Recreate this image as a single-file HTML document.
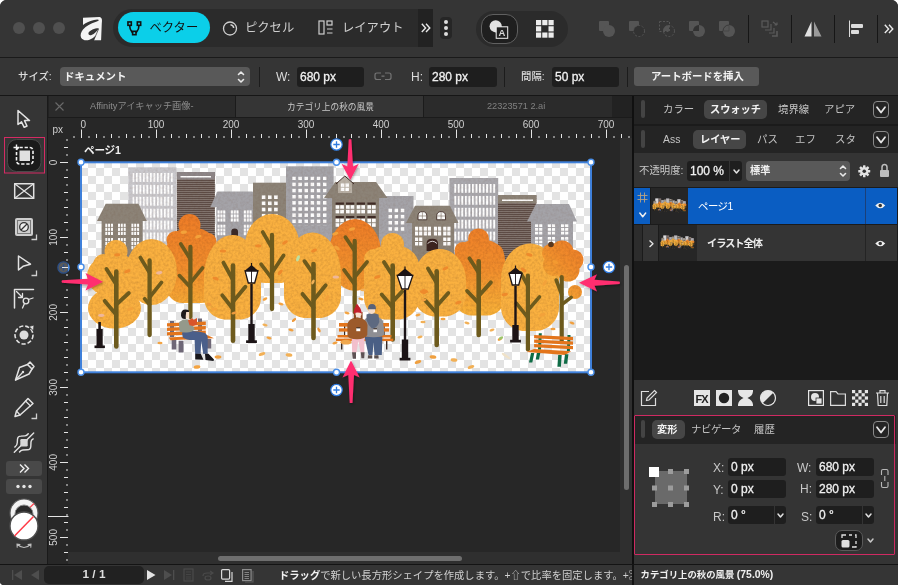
<!DOCTYPE html>
<html lang="ja">
<head>
<meta charset="utf-8">
<title>Affinity</title>
<style>
*{box-sizing:border-box;margin:0;padding:0}
html,body{width:898px;height:585px;overflow:hidden;background:#fff}
body{font-family:"Liberation Sans","Noto Sans CJK JP",sans-serif;font-size:11px;color:#d2d2d2;position:relative;-webkit-font-smoothing:antialiased}
.abs,#win *{position:absolute}
#win{will-change:transform;position:absolute;left:0;top:0;width:898px;height:585px;background:#1a1a1a;border-radius:6.500px 6.500px 0 4px;overflow:hidden}
.t{white-space:nowrap;line-height:1}
svg{display:block;overflow:visible}
#art{overflow:hidden}
/* title bar */
#title{left:0;top:0;width:898px;height:57px;background:#353535}
#ctx{left:0;top:58px;width:898px;height:37px;background:#353535}
.dot{width:12px;height:12px;border-radius:50%;background:#505050;top:22px}
.inp{background:#1e1e1e;border-radius:3px;color:#f0f0f0;font-size:12px}
.inp span{left:3px;top:4px;-webkit-text-stroke:0.300px #f0f0f0}
.sel{background:#595959;border-radius:4px}
.vsep{width:1px;background:#1c1c1c}
</style>
</head>
<body>
<div id="win">
<!-- TITLE BAR -->
<div id="title">
  <div class="dot" style="left:13px"></div><div class="dot" style="left:33px"></div><div class="dot" style="left:53px"></div>
  <svg style="left:80px;top:15.500px" width="23" height="25" viewBox="0 0 23 25"><path d="M3 1.700 L19.500 1 C22 1.300 22.300 4 21.800 7 L21.100 24.300 L13.900 24.300 L15.800 19.500 C13.500 22 11.500 23 9.500 23.700 C6 25 2.500 24.300 1 21.500 C0 19 1 16 3 13.500 C6 10 11 7.200 15.500 5.900 C17.500 5.300 19 4.900 18.800 4 C18.500 3.100 16.500 3.300 14 3.900 C9 5.100 5.500 6.900 3 8.900 Z" fill="#f4f4f4"/><path d="M18.900 12.200 C15 12 10 14 8.600 16.600 C7.800 18.600 9.500 19.900 11.500 19.100 C14.500 17.900 17 15.200 18.900 12.200 Z" fill="#353535"/><path d="M18.600 13 L13.600 24.500" stroke="#353535" stroke-width="0.700"/></svg>
  <div style="left:113px;top:9px;width:320px;height:38px;background:#2b2b2b;border-radius:19px 0 0 19px"></div>
  <div style="left:418px;top:9px;width:15px;height:38px;background:#222"></div>
  <div style="left:118.400px;top:12.400px;width:91.200px;height:31.100px;background:#0bcfe9;border-radius:15.500px"></div>
  <svg style="left:127px;top:20.700px" width="15" height="15" viewBox="0 0 16 16" fill="none" stroke="#111" stroke-width="1.700"><rect x="1" y="1" width="3.6" height="3.6"/><rect x="11" y="1" width="3.6" height="3.6"/><rect x="6" y="11" width="3.6" height="3.6"/><path d="M2.8 4.6 C2.8 10 5 11 6 12.5 M12.8 4.6 C12.8 10 10.5 11 9.6 12.5"/></svg>
  <div class="t" style="left:149.500px;top:22.200px;font-size:12.300px;color:#111">ベクター</div>
  <svg style="left:222px;top:20px" width="16" height="16" viewBox="0 0 16 16" fill="none" stroke="#cfcfcf" stroke-width="1.3"><circle cx="8" cy="8.500" r="6.500"/><path d="M8.500 4.800 A3.700 3.700 0 0 1 11.700 8" stroke-width="1.500"/></svg>
  <div class="t" style="left:245px;top:22.200px;font-size:12.300px;color:#cfcfcf">ピクセル</div>
  <svg style="left:318px;top:20px" width="16" height="16" viewBox="0 0 16 16" fill="none" stroke="#cfcfcf" stroke-width="1.2"><rect x="1" y="1" width="5" height="13"/><rect x="9" y="1" width="5" height="4"/><path d="M9 9 H14.5 M9 13 H14.5"/></svg>
  <div class="t" style="left:342px;top:22.200px;font-size:12.300px;color:#cfcfcf">レイアウト</div>
  <svg style="left:421.2px;top:23.2px" width="10" height="10" viewBox="0 0 10 10" fill="none" stroke="#e8e8e8" stroke-width="1.400"><path d="M0.800 0.800 L4.600 4.900 L0.800 9 M5 0.800 L8.800 4.900 L5 9"/></svg>
  <div style="left:440px;top:17px;width:12px;height:22px;background:#262626;border-radius:4px"></div>
  <div style="left:444px;top:20px;width:4px;height:4px;border-radius:50%;background:#ddd"></div>
  <div style="left:444px;top:26px;width:4px;height:4px;border-radius:50%;background:#ddd"></div>
  <div style="left:444px;top:32px;width:4px;height:4px;border-radius:50%;background:#ddd"></div>

  <!-- right side of title bar -->
  <div style="left:476px;top:10.500px;width:92px;height:36px;background:#2b2b2b;border-radius:18px"></div>
  <div style="left:480.500px;top:14.200px;width:37.500px;height:29.400px;background:#1f1f1f;border:1px solid #606060;border-radius:12px"></div>
  <svg style="left:488px;top:18.500px" width="22" height="21" viewBox="0 0 22 21"><circle cx="7.700" cy="7.300" r="6.100" fill="#e2e2e2"/><rect x="8.200" y="7.800" width="11.500" height="11.500" fill="#202020" stroke="#f0f0f0" stroke-width="1"/><text x="14" y="17.300" font-size="9.500" font-family="Liberation Sans, sans-serif" font-weight="bold" fill="#d8d8d8" text-anchor="middle">A</text></svg>
  <svg style="left:535.900px;top:19.700px" width="17.700" height="17.700" viewBox="0 0 17.700 17.700" fill="#ececec"><rect x="0" y="0" width="5.200" height="5.200"/><rect x="0" y="6.25" width="5.200" height="5.200"/><rect x="0" y="12.5" width="5.200" height="5.200"/><rect x="6.25" y="0" width="5.200" height="5.200"/><rect x="6.25" y="12.5" width="5.200" height="5.200"/><rect x="12.5" y="0" width="5.200" height="5.200"/><rect x="12.5" y="6.25" width="5.200" height="5.200"/><rect x="12.5" y="12.5" width="5.200" height="5.200"/></svg>
  <!-- boolean ops (dim) -->
  <svg style="left:598px;top:20px" width="140" height="18" viewBox="0 0 140 18">
    <g fill="#555">
      <rect x="1" y="1" width="10" height="10" rx="1"/><circle cx="11" cy="11" r="6"/>
      <rect x="31" y="1" width="10" height="10" rx="1"/>
      <rect x="91" y="1" width="10" height="10" rx="1"/><circle cx="101" cy="11" r="6"/>
      <rect x="121" y="1" width="10" height="10" rx="1"/><circle cx="131" cy="11" r="6"/>
    </g>
    <circle cx="41" cy="11" r="5.5" fill="#323232" stroke="#555" stroke-width="1" stroke-dasharray="2 1.5"/>
    <rect x="61.5" y="1.5" width="10" height="10" fill="none" stroke="#555" stroke-width="1" stroke-dasharray="2 1.5"/>
    <path d="M71 5 A6 6 0 0 0 65 11 L71 11 Z" fill="#555"/>
    <circle cx="71" cy="11" r="5.5" fill="none" stroke="#555" stroke-width="1" stroke-dasharray="2 1.5"/>
    <path d="M95 11 A6 6 0 0 1 101 5 L101 11 Z" fill="#323232"/>
    <path d="M125 11 A6 6 0 0 1 131 5" fill="none" stroke="#333" stroke-width="0.800"/><path d="M125.500 11 H131 V5.500" fill="none" stroke="#444" stroke-width="0.800"/>
  </svg>
  <div class="vsep" style="left:748px;top:15px;height:28px;background:#161616"></div>
  <svg style="left:761px;top:20px" width="20" height="18" viewBox="0 0 20 18" fill="none" stroke="#5a5a5a" stroke-width="1.2"><rect x="1" y="1" width="6" height="6"/><path d="M4 10 H10 V4 M8 13 H13 V8"/><path d="M11 16 H16 V11" stroke-width="1.6"/><path d="M12 2 L16 5 M16 5 V2.5 M16 5 H13.5"/></svg>
  <div class="vsep" style="left:791px;top:15px;height:28px;background:#161616"></div>
  <svg style="left:804px;top:21px" width="18" height="16" viewBox="0 0 18 16"><path d="M0.5 15.5 L7.5 0.5 L7.5 15.5 Z" fill="#e0e0e0"/><path d="M10 15.5 L10 0.5 L17.5 15.5 Z" fill="#9a9a9a"/></svg>
  <div class="vsep" style="left:834px;top:15px;height:28px;background:#161616"></div>
  <svg style="left:848px;top:20px" width="16" height="18" viewBox="0 0 16 18"><rect x="1" y="0.500" width="1" height="16.500" fill="#dcdcdc"/><rect x="3" y="4" width="12" height="4" rx="1" fill="#dcdcdc"/><rect x="3" y="10" width="8" height="4" rx="1" fill="#dcdcdc"/></svg>
  <div class="vsep" style="left:877px;top:15px;height:28px;background:#161616"></div>
  <svg style="left:883.5px;top:24.2px" width="10" height="10" viewBox="0 0 10 10" fill="none" stroke="#e8e8e8" stroke-width="1.400"><path d="M0.800 0.800 L4.600 4.900 L0.800 9 M5 0.800 L8.800 4.900 L5 9"/></svg>
</div>
<div style="left:0;top:57px;width:898px;height:1px;background:#1a1a1a"></div>
<!-- CONTEXT BAR -->
<div id="ctx">
  <div class="t" style="left:18px;top:13.500px;font-size:10.400px;font-weight:500;color:#dcdcdc">サイズ:</div>
  <div class="sel" style="left:59.500px;top:8.700px;width:190px;height:19.600px"></div>
  <div class="t" style="left:64px;top:13.500px;font-size:10.400px;font-weight:bold;color:#f2f2f2">ドキュメント</div>
  <svg style="left:374px;top:14px" width="18" height="9" viewBox="0 0 18 9" fill="none" stroke="#757575" stroke-width="1.2"><path d="M7 1 H3 Q1 1 1 3 V5.5 Q1 7.5 3 7.5 H7 M11 1 H15 Q17 1 17 3 V5.5 Q17 7.5 15 7.5 H11 M7.5 4.2 H10.5"/></svg>
  <svg style="left:237px;top:12px" width="8" height="14" viewBox="0 0 8 14" fill="none" stroke="#e8e8e8" stroke-width="1.6" stroke-linecap="round" stroke-linejoin="round"><path d="M1.5 4.5 L4 2 L6.5 4.5 M1.5 9.5 L4 12 L6.5 9.5"/></svg>
  <div class="vsep" style="left:259px;top:9px;height:20px"></div>
  <div class="t" style="left:276px;top:13px;font-size:12px;color:#dcdcdc">W:</div>
  <div class="inp" style="left:297px;top:9px;width:67px;height:20px"><span class="t">680 px</span></div>
  <div class="t" style="left:411px;top:13px;font-size:12px;color:#dcdcdc">H:</div>
  <div class="inp" style="left:429px;top:9px;width:68px;height:20px"><span class="t">280 px</span></div>
  <div class="vsep" style="left:504px;top:9px;height:20px"></div>
  <div class="t" style="left:521px;top:13.500px;font-size:10.400px;font-weight:500;color:#dcdcdc">間隔:</div>
  <div class="inp" style="left:552px;top:9px;width:67px;height:20px"><span class="t">50 px</span></div>
  <div class="vsep" style="left:627px;top:9px;height:20px"></div>
  <div class="sel" style="left:634px;top:9px;width:125px;height:19px;border-radius:3px"></div>
  <div class="t" style="left:651px;top:13.500px;font-size:10.400px;font-weight:bold;color:#f2f2f2">アートボードを挿入</div>
</div>
<div style="left:0;top:95px;width:898px;height:1px;background:#161616"></div>

<!-- LEFT TOOLBAR -->
<div id="tools" style="left:0;top:96px;width:47px;height:468px;background:#353535"></div>
<div style="left:47px;top:96px;width:1px;height:468px;background:#1a1a1a"></div>

<svg style="left:0;top:96px" width="48" height="468" viewBox="0 96 48 468">
 <g fill="none" stroke="#e2e2e2" stroke-width="1.5" stroke-linejoin="round" stroke-linecap="round">
  <!-- move -->
  <path d="M18 110.500 L18 124.500 L21.500 121.800 L24.200 127.300 L27 126 L24.500 120.600 L29.500 120.600 Z"/>
  <!-- place image -->
  <rect x="14.700" y="183.700" width="19" height="14.600"/><path d="M14.700 183.700 L33.700 198.300 M33.700 183.700 L14.700 198.300" stroke-width="1.200"/>
  <!-- node tool -->
  <path d="M18.500 256 L18.500 270 L23 266.300 L30.500 264.200 Z"/>
  <path d="M36.500 270.500 V275.500 H31.500" stroke="#cfcfcf" stroke-width="1.300" stroke-linejoin="miter" stroke-linecap="butt"/>
  <!-- corner tool -->
  <path d="M14.500 289.500 H33.500 M14.500 289.500 V308" /><path d="M16.500 291.500 L22.500 297.500 M22.500 293.500 V297.500 H18.500" stroke-width="1.300"/><circle cx="26" cy="301" r="2.800" stroke-width="1.300"/><path d="M24.500 303.500 L22.500 308 M28.500 299.500 L33 298" stroke-width="1.300"/>
  <!-- pen -->
  <path d="M27.500 364.500 L32 369 L29 374 L15.500 380 L19.500 367.500 Z"/><path d="M27.500 364.500 L30 362 L34 366.500 L32 369"/><path d="M15.500 380 L22.500 372.500" stroke-width="1.200"/><circle cx="23" cy="372" r="1.200" fill="#e2e2e2" stroke="none"/>
  <!-- pencil -->
  <path d="M28 398.500 L33 403.500 L20 415 L15 416.500 L16.500 411 Z"/><path d="M25.500 401 L30.500 406" stroke-width="1.200"/><path d="M16.500 411 L20 415" stroke-width="1.200"/>
  <path d="M36.500 413.500 V418.500 H31.500" stroke="#cfcfcf" stroke-width="1.300" stroke-linejoin="miter" stroke-linecap="butt"/>
  <!-- vector brush -->
  <path d="M14.800 447.100 C17 445.500 17.300 444 17.300 442.400 L17.500 439 C17.700 436.800 19 436.100 20.800 436.100 L25 435.900 C26.800 435.800 27.500 434.800 28.300 433.700" stroke-width="1.400"/>
  <path d="M19.500 452 C20.500 450.500 21.500 450 22.800 449.950 L27.200 449.800 C29.500 449.700 30.700 448.800 30.800 446.500 L31 441.900 C31.100 440.500 32 439.600 33.200 438.900" stroke-width="1.400"/>
  <path d="M14.300 452.300 L33.700 433.100" stroke-width="1.400"/>
 </g>
 <rect x="20.300" y="439.100" width="7.400" height="7.400" rx="1.200" fill="#d8d8d8"/>
 <!-- artboard tool (active) -->
 <rect x="7.500" y="139.500" width="33.500" height="32" rx="9" fill="#1b1b1b" stroke="#4a4a4a" stroke-width="1"/>
 <rect x="4.500" y="137.500" width="40" height="35.500" fill="none" stroke="#d62b64" stroke-width="1"/>
 <rect x="16.500" y="147.500" width="16.500" height="16.500" rx="3" fill="none" stroke="#f2f2f2" stroke-width="1.600" stroke-dasharray="3.300 1.800"/>
 <rect x="19.500" y="150.500" width="10.500" height="10.500" fill="#e0e0e0"/>
 <path d="M13.500 147.500 H19 M16.500 144.500 V150" stroke="#f2f2f2" stroke-width="1.400"/>
 <!-- fill tool -->
 <rect x="15" y="218" width="18" height="18" rx="2" fill="#cdcdcd"/>
 <g fill="#7a7a7a"><rect x="17" y="220" width="1" height="14"/><rect x="30" y="220" width="1" height="14"/><rect x="17" y="220" width="14" height="1"/><rect x="17" y="233" width="14" height="1"/></g>
 <circle cx="24" cy="227" r="4.300" fill="#ededed" stroke="#333" stroke-width="1.300"/><path d="M21 230 L27 224" stroke="#333" stroke-width="1.300"/>
 <path d="M36.500 234.500 V239.500 H31.500" stroke="#cfcfcf" stroke-width="1.300" fill="none"/>
 <!-- dashed circle tool -->
 <circle cx="24" cy="335" r="9" fill="none" stroke="#e2e2e2" stroke-width="1.600" stroke-dasharray="4.200 2"/>
 <circle cx="24" cy="335" r="4.500" fill="#dedede"/>
 <path d="M29 326.500 L34 325 L33.500 331 Z" fill="#e2e2e2" stroke="#333" stroke-width="0.800"/>
 <!-- buttons -->
 <rect x="6" y="461" width="36" height="15" rx="3" fill="#494949"/>
 <path d="M20 464.500 L24 468.500 L20 472.500 M24.500 464.500 L28.500 468.500 L24.500 472.500" fill="none" stroke="#f0f0f0" stroke-width="1.400"/>
 <rect x="6" y="479" width="36" height="15" rx="3" fill="#494949"/>
 <circle cx="18" cy="486.500" r="1.700" fill="#e6e6e6"/><circle cx="24" cy="486.500" r="1.700" fill="#e6e6e6"/><circle cx="30" cy="486.500" r="1.700" fill="#e6e6e6"/>
 <!-- colour wells -->
 <circle cx="24" cy="513" r="14" fill="#f4f4f4" stroke="#5a5a5a" stroke-width="1.200"/>
 <path d="M14.500 522.500 L34 503.500" stroke="#ff4a55" stroke-width="1.300"/>
 <circle cx="24" cy="514" r="9" fill="#2a2a2a" stroke="#8a8a8a" stroke-width="1"/>
 <circle cx="24" cy="526" r="14" fill="#fff" stroke="#4e4e4e" stroke-width="1.400"/>
 <path d="M14.500 536 L33.500 516.500" stroke="#ff3b47" stroke-width="1.500"/>
 <path d="M17 544 Q24 551 31 544 M17 544 L17.200 547.200 M17 544 L20 544.500 M31 544 L30.800 547.200 M31 544 L28 544.500" fill="none" stroke="#bdbdbd" stroke-width="1.100" stroke-linecap="round"/>
</svg>
<!-- CANVAS AREA -->
<div id="canvas" style="left:48px;top:96px;width:584px;height:468px;background:#272727"></div>
<!-- tabs -->
<div style="left:48px;top:96px;width:584px;height:21px;background:#222"></div>
<div style="left:49px;top:96px;width:186px;height:21px;background:#2b2b2b"></div>
<div style="left:236px;top:96px;width:187px;height:21px;background:#353535"></div>
<div style="left:424px;top:96px;width:188px;height:21px;background:#2b2b2b"></div>
<svg style="left:55px;top:102px" width="9" height="9" viewBox="0 0 9 9" stroke="#696969" stroke-width="1.1"><path d="M0.5 0.5 L8.5 8.5 M8.5 0.5 L0.5 8.5"/></svg>
<div class="t" style="left:90px;top:102px;font-size:9.200px;color:#8c8c8c">Affinityアイキャッチ画像-</div>
<div class="t" style="left:287px;top:102.500px;font-size:8.700px;color:#c8c8c8">カテゴリ上の秋の風景</div>
<div class="t" style="left:487px;top:102px;font-size:9.200px;color:#808080">22323571 2.ai</div>
<div style="left:48px;top:116.500px;width:584px;height:1.300px;background:#1b1b1b"></div>
<div style="left:235px;top:96px;width:1px;height:21px;background:#1b1b1b"></div><div style="left:423px;top:96px;width:1px;height:21px;background:#1b1b1b"></div>
<!-- scroll tracks -->
<div style="left:620px;top:138px;width:12px;height:414px;background:#2f2f2f"></div>
<div style="left:68px;top:552px;width:564px;height:12px;background:#2f2f2f"></div>
<div style="left:624px;top:265px;width:5px;height:225px;background:#6e6e6e;border-radius:2.5px"></div>
<div style="left:218px;top:556px;width:244px;height:5px;background:#6e6e6e;border-radius:2.5px"></div>
<svg style="left:0;top:0" width="898" height="585" viewBox="0 0 898 585">
<g fill="#e4e4e4"><rect x="73.5" y="136" width="1" height="2"/><rect x="81.0" y="129.5" width="1" height="8.5"/><rect x="88.5" y="136" width="1" height="2"/><rect x="96.0" y="134" width="1" height="4"/><rect x="103.5" y="136" width="1" height="2"/><rect x="111.0" y="134" width="1" height="4"/><rect x="118.5" y="136" width="1" height="2"/><rect x="126.0" y="134" width="1" height="4"/><rect x="133.5" y="136" width="1" height="2"/><rect x="141.0" y="134" width="1" height="4"/><rect x="148.5" y="136" width="1" height="2"/><rect x="156.0" y="129.5" width="1" height="8.5"/><rect x="163.5" y="136" width="1" height="2"/><rect x="171.0" y="134" width="1" height="4"/><rect x="178.5" y="136" width="1" height="2"/><rect x="186.0" y="134" width="1" height="4"/><rect x="193.5" y="136" width="1" height="2"/><rect x="201.0" y="134" width="1" height="4"/><rect x="208.5" y="136" width="1" height="2"/><rect x="216.0" y="134" width="1" height="4"/><rect x="223.5" y="136" width="1" height="2"/><rect x="231.0" y="129.5" width="1" height="8.5"/><rect x="238.5" y="136" width="1" height="2"/><rect x="246.0" y="134" width="1" height="4"/><rect x="253.5" y="136" width="1" height="2"/><rect x="261.0" y="134" width="1" height="4"/><rect x="268.5" y="136" width="1" height="2"/><rect x="276.0" y="134" width="1" height="4"/><rect x="283.5" y="136" width="1" height="2"/><rect x="291.0" y="134" width="1" height="4"/><rect x="298.5" y="136" width="1" height="2"/><rect x="306.0" y="129.5" width="1" height="8.5"/><rect x="313.5" y="136" width="1" height="2"/><rect x="321.0" y="134" width="1" height="4"/><rect x="328.5" y="136" width="1" height="2"/><rect x="336.0" y="134" width="1" height="4"/><rect x="343.5" y="136" width="1" height="2"/><rect x="351.0" y="134" width="1" height="4"/><rect x="358.5" y="136" width="1" height="2"/><rect x="366.0" y="134" width="1" height="4"/><rect x="373.5" y="136" width="1" height="2"/><rect x="381.0" y="129.5" width="1" height="8.5"/><rect x="388.5" y="136" width="1" height="2"/><rect x="396.0" y="134" width="1" height="4"/><rect x="403.5" y="136" width="1" height="2"/><rect x="411.0" y="134" width="1" height="4"/><rect x="418.5" y="136" width="1" height="2"/><rect x="426.0" y="134" width="1" height="4"/><rect x="433.5" y="136" width="1" height="2"/><rect x="441.0" y="134" width="1" height="4"/><rect x="448.5" y="136" width="1" height="2"/><rect x="456.0" y="129.5" width="1" height="8.5"/><rect x="463.5" y="136" width="1" height="2"/><rect x="471.0" y="134" width="1" height="4"/><rect x="478.5" y="136" width="1" height="2"/><rect x="486.0" y="134" width="1" height="4"/><rect x="493.5" y="136" width="1" height="2"/><rect x="501.0" y="134" width="1" height="4"/><rect x="508.5" y="136" width="1" height="2"/><rect x="516.0" y="134" width="1" height="4"/><rect x="523.5" y="136" width="1" height="2"/><rect x="531.0" y="129.5" width="1" height="8.5"/><rect x="538.5" y="136" width="1" height="2"/><rect x="546.0" y="134" width="1" height="4"/><rect x="553.5" y="136" width="1" height="2"/><rect x="561.0" y="134" width="1" height="4"/><rect x="568.5" y="136" width="1" height="2"/><rect x="576.0" y="134" width="1" height="4"/><rect x="583.5" y="136" width="1" height="2"/><rect x="591.0" y="134" width="1" height="4"/><rect x="598.5" y="136" width="1" height="2"/><rect x="606.0" y="129.5" width="1" height="8.5"/><rect x="613.5" y="136" width="1" height="2"/><rect x="64" y="147.0" width="4" height="1"/><rect x="66" y="154.5" width="2" height="1"/><rect x="60" y="162.0" width="8" height="1"/><rect x="66" y="169.5" width="2" height="1"/><rect x="64" y="177.0" width="4" height="1"/><rect x="66" y="184.5" width="2" height="1"/><rect x="64" y="192.0" width="4" height="1"/><rect x="66" y="199.5" width="2" height="1"/><rect x="64" y="207.0" width="4" height="1"/><rect x="66" y="214.5" width="2" height="1"/><rect x="64" y="222.0" width="4" height="1"/><rect x="66" y="229.5" width="2" height="1"/><rect x="60" y="237.0" width="8" height="1"/><rect x="66" y="244.5" width="2" height="1"/><rect x="64" y="252.0" width="4" height="1"/><rect x="66" y="259.5" width="2" height="1"/><rect x="64" y="267.0" width="4" height="1"/><rect x="66" y="274.5" width="2" height="1"/><rect x="64" y="282.0" width="4" height="1"/><rect x="66" y="289.5" width="2" height="1"/><rect x="64" y="297.0" width="4" height="1"/><rect x="66" y="304.5" width="2" height="1"/><rect x="60" y="312.0" width="8" height="1"/><rect x="66" y="319.5" width="2" height="1"/><rect x="64" y="327.0" width="4" height="1"/><rect x="66" y="334.5" width="2" height="1"/><rect x="64" y="342.0" width="4" height="1"/><rect x="66" y="349.5" width="2" height="1"/><rect x="64" y="357.0" width="4" height="1"/><rect x="66" y="364.5" width="2" height="1"/><rect x="64" y="372.0" width="4" height="1"/><rect x="66" y="379.5" width="2" height="1"/><rect x="60" y="387.0" width="8" height="1"/><rect x="66" y="394.5" width="2" height="1"/><rect x="64" y="402.0" width="4" height="1"/><rect x="66" y="409.5" width="2" height="1"/><rect x="64" y="417.0" width="4" height="1"/><rect x="66" y="424.5" width="2" height="1"/><rect x="64" y="432.0" width="4" height="1"/><rect x="66" y="439.5" width="2" height="1"/><rect x="64" y="447.0" width="4" height="1"/><rect x="66" y="454.5" width="2" height="1"/><rect x="60" y="462.0" width="8" height="1"/><rect x="66" y="469.5" width="2" height="1"/><rect x="64" y="477.0" width="4" height="1"/><rect x="66" y="484.5" width="2" height="1"/><rect x="64" y="492.0" width="4" height="1"/><rect x="66" y="499.5" width="2" height="1"/><rect x="64" y="507.0" width="4" height="1"/><rect x="66" y="514.5" width="2" height="1"/><rect x="64" y="522.0" width="4" height="1"/><rect x="66" y="529.5" width="2" height="1"/><rect x="60" y="537.0" width="8" height="1"/><rect x="66" y="544.5" width="2" height="1"/><rect x="64" y="552.0" width="4" height="1"/><rect x="66" y="559.5" width="2" height="1"/><rect x="621.0" y="134" width="1" height="4"/><rect x="628.5" y="136" width="1" height="2"/><rect x="66" y="139.500" width="2" height="1"/><rect x="48" y="516" width="20.5" height="1"/></g>
<g fill="#cfcfcf" font-size="10" font-family="Liberation Sans, sans-serif"><text x="83.200" y="128" text-anchor="middle">0</text><text x="156.0" y="128" text-anchor="middle">100</text><text x="231.0" y="128" text-anchor="middle">200</text><text x="306.0" y="128" text-anchor="middle">300</text><text x="381.0" y="128" text-anchor="middle">400</text><text x="456.0" y="128" text-anchor="middle">500</text><text x="531.0" y="128" text-anchor="middle">600</text><text x="606.0" y="128" text-anchor="middle">700</text><text transform="translate(57,162.4) rotate(-90)" text-anchor="middle">0</text><text transform="translate(57,237.4) rotate(-90)" text-anchor="middle">100</text><text transform="translate(57,312.4) rotate(-90)" text-anchor="middle">200</text><text transform="translate(57,387.4) rotate(-90)" text-anchor="middle">300</text><text transform="translate(57,462.4) rotate(-90)" text-anchor="middle">400</text><text transform="translate(57,537.4) rotate(-90)" text-anchor="middle">500</text><text x="52.5" y="133">px</text></g>
</svg>
<!-- ARTBOARD -->
<div class="t" style="left:84px;top:144.500px;font-size:10.600px;font-weight:bold;letter-spacing:-0.200px;color:#f0f0f0">ページ1</div>
<svg id="art" style="left:81px;top:162px" width="510" height="210" viewBox="0 0 510 210">
<defs><pattern id="chk" x="-1" y="-2" width="16" height="16" patternUnits="userSpaceOnUse"><rect width="16" height="16" fill="#fff"/><rect x="8" width="8" height="8" fill="#e3e3e3"/><rect y="8" width="8" height="8" fill="#e3e3e3"/></pattern></defs>
<rect width="510" height="210" fill="url(#chk)"/>
<!--ILLUSTRATION-->
<defs>
<linearGradient id="og" gradientUnits="userSpaceOnUse" x1="0" y1="52" x2="0" y2="150"><stop offset="0" stop-color="#ee7c27"/><stop offset="0.55" stop-color="#f18d2c"/><stop offset="1" stop-color="#f8b038"/></linearGradient>
<linearGradient id="og2" x1="0" y1="0" x2="0" y2="1"><stop offset="0" stop-color="#ee7c27"/><stop offset="1" stop-color="#f39a30"/></linearGradient>
<linearGradient id="og3" gradientUnits="userSpaceOnUse" x1="500" y1="85" x2="462" y2="125"><stop offset="0" stop-color="#ee8029"/><stop offset="0.45" stop-color="#f18e2c"/><stop offset="1" stop-color="#f7ad38"/></linearGradient>
<pattern id="bars" width="3.5" height="11.9" patternUnits="userSpaceOnUse"><rect x="0" y="0" width="1.9" height="8.9" fill="#fff"/></pattern>
<pattern id="bars2" width="3.55" height="11.9" patternUnits="userSpaceOnUse"><rect x="0" y="0" width="2" height="8.8" fill="#fff"/></pattern>
<pattern id="strp" width="4" height="2" patternUnits="userSpaceOnUse"><rect width="4" height="2" fill="#5d4c46"/><rect y="1.4" width="4" height="0.6" fill="#998e88"/></pattern>
<pattern id="sq" width="6.15" height="6.15" patternUnits="userSpaceOnUse"><rect width="3.5" height="3.5" fill="#fff"/></pattern>
<filter id="tex" x="0" y="0" width="510" height="210" filterUnits="userSpaceOnUse" color-interpolation-filters="sRGB"><feTurbulence type="fractalNoise" baseFrequency="0.4" numOctaves="2" seed="7" result="n"/><feColorMatrix in="n" type="matrix" values="0 0 0 0 0.35  0 0 0 0 0.18  0 0 0 0 0.08  0 0 0 0.32 -0.115" result="a"/><feComposite in="a" in2="SourceAlpha" operator="in" result="b"/><feMerge><feMergeNode in="SourceGraphic"/><feMergeNode in="b"/></feMerge></filter>
<filter id="tex2" x="0" y="0" width="510" height="210" filterUnits="userSpaceOnUse" color-interpolation-filters="sRGB"><feTurbulence type="fractalNoise" baseFrequency="0.4" numOctaves="2" seed="11" result="n"/><feColorMatrix in="n" type="matrix" values="0 0 0 0 0.35  0 0 0 0 0.18  0 0 0 0 0.08  0 0 0 0.2 -0.075" result="a"/><feComposite in="a" in2="SourceAlpha" operator="in" result="b"/><feMerge><feMergeNode in="SourceGraphic"/><feMergeNode in="b"/></feMerge></filter>
</defs>
<g id="illus">
<g id="buildings" filter="url(#tex2)">
<rect x="47.3" y="5.3" width="48.2" height="95" fill="#c9c8cc"/>
<g transform="translate(51.4,11)"><rect width="41" height="90" fill="url(#bars)"/></g>
<rect x="95.9" y="10" width="38" height="85" fill="url(#strp)"/>
<rect x="95.9" y="10" width="38" height="7.5" fill="#8d8688"/><rect x="99.5" y="14" width="30.5" height="1.5" fill="#fff"/>
<path d="M16 59 L24.7 41.8 L57.5 41.8 L65.8 59 Z" fill="#8c8377"/><rect x="20.6" y="58.5" width="41" height="40" fill="#8c8377"/>
<rect x="24.3" y="61.7" width="2.0" height="3.2" fill="#fff"/><rect x="24.3" y="65.7" width="2.0" height="3.2" fill="#fff"/><rect x="24.3" y="69.8" width="2.0" height="3.2" fill="#fff"/><rect x="27.1" y="61.7" width="2.0" height="3.2" fill="#fff"/><rect x="27.1" y="65.7" width="2.0" height="3.2" fill="#fff"/><rect x="27.1" y="69.8" width="2.0" height="3.2" fill="#fff"/><rect x="30.0" y="61.7" width="2.0" height="3.2" fill="#fff"/><rect x="30.0" y="65.7" width="2.0" height="3.2" fill="#fff"/><rect x="30.0" y="69.8" width="2.0" height="3.2" fill="#fff"/>
<rect x="24.3" y="76.0" width="2.0" height="3.2" fill="#fff"/><rect x="24.3" y="80.0" width="2.0" height="3.2" fill="#fff"/><rect x="24.3" y="84.1" width="2.0" height="3.2" fill="#fff"/><rect x="27.1" y="76.0" width="2.0" height="3.2" fill="#fff"/><rect x="27.1" y="80.0" width="2.0" height="3.2" fill="#fff"/><rect x="27.1" y="84.1" width="2.0" height="3.2" fill="#fff"/><rect x="30.0" y="76.0" width="2.0" height="3.2" fill="#fff"/><rect x="30.0" y="80.0" width="2.0" height="3.2" fill="#fff"/><rect x="30.0" y="84.1" width="2.0" height="3.2" fill="#fff"/>
<rect x="37.0" y="61.7" width="2.0" height="3.2" fill="#fff"/><rect x="37.0" y="65.7" width="2.0" height="3.2" fill="#fff"/><rect x="37.0" y="69.8" width="2.0" height="3.2" fill="#fff"/><rect x="39.8" y="61.7" width="2.0" height="3.2" fill="#fff"/><rect x="39.8" y="65.7" width="2.0" height="3.2" fill="#fff"/><rect x="39.8" y="69.8" width="2.0" height="3.2" fill="#fff"/><rect x="42.7" y="61.7" width="2.0" height="3.2" fill="#fff"/><rect x="42.7" y="65.7" width="2.0" height="3.2" fill="#fff"/><rect x="42.7" y="69.8" width="2.0" height="3.2" fill="#fff"/>
<rect x="37.0" y="76.0" width="2.0" height="3.2" fill="#fff"/><rect x="37.0" y="80.0" width="2.0" height="3.2" fill="#fff"/><rect x="37.0" y="84.1" width="2.0" height="3.2" fill="#fff"/><rect x="39.8" y="76.0" width="2.0" height="3.2" fill="#fff"/><rect x="39.8" y="80.0" width="2.0" height="3.2" fill="#fff"/><rect x="39.8" y="84.1" width="2.0" height="3.2" fill="#fff"/><rect x="42.7" y="76.0" width="2.0" height="3.2" fill="#fff"/><rect x="42.7" y="80.0" width="2.0" height="3.2" fill="#fff"/><rect x="42.7" y="84.1" width="2.0" height="3.2" fill="#fff"/>
<rect x="50.4" y="61.7" width="2.0" height="3.2" fill="#fff"/><rect x="50.4" y="65.7" width="2.0" height="3.2" fill="#fff"/><rect x="50.4" y="69.8" width="2.0" height="3.2" fill="#fff"/><rect x="53.2" y="61.7" width="2.0" height="3.2" fill="#fff"/><rect x="53.2" y="65.7" width="2.0" height="3.2" fill="#fff"/><rect x="53.2" y="69.8" width="2.0" height="3.2" fill="#fff"/><rect x="56.1" y="61.7" width="2.0" height="3.2" fill="#fff"/><rect x="56.1" y="65.7" width="2.0" height="3.2" fill="#fff"/><rect x="56.1" y="69.8" width="2.0" height="3.2" fill="#fff"/>
<rect x="50.4" y="76.0" width="2.0" height="3.2" fill="#fff"/><rect x="50.4" y="80.0" width="2.0" height="3.2" fill="#fff"/><rect x="50.4" y="84.1" width="2.0" height="3.2" fill="#fff"/><rect x="53.2" y="76.0" width="2.0" height="3.2" fill="#fff"/><rect x="53.2" y="80.0" width="2.0" height="3.2" fill="#fff"/><rect x="53.2" y="84.1" width="2.0" height="3.2" fill="#fff"/><rect x="56.1" y="76.0" width="2.0" height="3.2" fill="#fff"/><rect x="56.1" y="80.0" width="2.0" height="3.2" fill="#fff"/><rect x="56.1" y="84.1" width="2.0" height="3.2" fill="#fff"/>
<path d="M129.3 45 L136.5 29.5 L171.5 29.5 L179 45 Z" fill="#a4a3a8"/><rect x="135.5" y="44.5" width="37" height="55" fill="#a4a3a8"/>
<rect x="136.5" y="48.4" width="2.1" height="3.2" fill="#fff"/><rect x="136.5" y="52.4" width="2.1" height="3.2" fill="#fff"/><rect x="136.5" y="56.4" width="2.1" height="3.2" fill="#fff"/><rect x="139.4" y="48.4" width="2.1" height="3.2" fill="#fff"/><rect x="139.4" y="52.4" width="2.1" height="3.2" fill="#fff"/><rect x="139.4" y="56.4" width="2.1" height="3.2" fill="#fff"/><rect x="142.2" y="48.4" width="2.1" height="3.2" fill="#fff"/><rect x="142.2" y="52.4" width="2.1" height="3.2" fill="#fff"/><rect x="142.2" y="56.4" width="2.1" height="3.2" fill="#fff"/>
<rect x="149.8" y="48.4" width="2.1" height="3.2" fill="#fff"/><rect x="149.8" y="52.4" width="2.1" height="3.2" fill="#fff"/><rect x="149.8" y="56.4" width="2.1" height="3.2" fill="#fff"/><rect x="152.7" y="48.4" width="2.1" height="3.2" fill="#fff"/><rect x="152.7" y="52.4" width="2.1" height="3.2" fill="#fff"/><rect x="152.7" y="56.4" width="2.1" height="3.2" fill="#fff"/><rect x="155.5" y="48.4" width="2.1" height="3.2" fill="#fff"/><rect x="155.5" y="52.4" width="2.1" height="3.2" fill="#fff"/><rect x="155.5" y="56.4" width="2.1" height="3.2" fill="#fff"/>
<rect x="162.8" y="48.4" width="2.1" height="3.2" fill="#fff"/><rect x="162.8" y="52.4" width="2.1" height="3.2" fill="#fff"/><rect x="162.8" y="56.4" width="2.1" height="3.2" fill="#fff"/><rect x="165.7" y="48.4" width="2.1" height="3.2" fill="#fff"/><rect x="165.7" y="52.4" width="2.1" height="3.2" fill="#fff"/><rect x="165.7" y="56.4" width="2.1" height="3.2" fill="#fff"/><rect x="168.5" y="48.4" width="2.1" height="3.2" fill="#fff"/><rect x="168.5" y="52.4" width="2.1" height="3.2" fill="#fff"/><rect x="168.5" y="56.4" width="2.1" height="3.2" fill="#fff"/>
<rect x="136.5" y="62.7" width="2.1" height="3.0" fill="#fff"/><rect x="136.5" y="66.5" width="2.1" height="3.0" fill="#fff"/><rect x="136.5" y="70.2" width="2.1" height="3.0" fill="#fff"/><rect x="139.4" y="62.7" width="2.1" height="3.0" fill="#fff"/><rect x="139.4" y="66.5" width="2.1" height="3.0" fill="#fff"/><rect x="139.4" y="70.2" width="2.1" height="3.0" fill="#fff"/><rect x="142.2" y="62.7" width="2.1" height="3.0" fill="#fff"/><rect x="142.2" y="66.5" width="2.1" height="3.0" fill="#fff"/><rect x="142.2" y="70.2" width="2.1" height="3.0" fill="#fff"/>
<rect x="162.8" y="62.7" width="2.1" height="3.0" fill="#fff"/><rect x="162.8" y="66.5" width="2.1" height="3.0" fill="#fff"/><rect x="162.8" y="70.2" width="2.1" height="3.0" fill="#fff"/><rect x="165.7" y="62.7" width="2.1" height="3.0" fill="#fff"/><rect x="165.7" y="66.5" width="2.1" height="3.0" fill="#fff"/><rect x="165.7" y="70.2" width="2.1" height="3.0" fill="#fff"/><rect x="168.5" y="62.7" width="2.1" height="3.0" fill="#fff"/><rect x="168.5" y="66.5" width="2.1" height="3.0" fill="#fff"/><rect x="168.5" y="70.2" width="2.1" height="3.0" fill="#fff"/>
<path d="M150.3 74 V69.5 Q150.3 66.6 153.6 66.6 Q157 66.6 157 69.5 V74 Z" fill="#3a2a28"/>
<rect x="172" y="20.7" width="33.5" height="80" fill="#8c8377"/>
<rect x="180.8" y="33.4" width="3.6" height="3.6" fill="#fff"/>
<rect x="187.0" y="33.4" width="3.6" height="3.6" fill="#fff"/>
<rect x="193.1" y="33.4" width="3.6" height="3.6" fill="#fff"/>
<rect x="180.8" y="39.5" width="3.6" height="3.6" fill="#fff"/>
<rect x="187.0" y="39.5" width="3.6" height="3.6" fill="#fff"/>
<rect x="193.1" y="39.5" width="3.6" height="3.6" fill="#fff"/>
<rect x="180.8" y="45.7" width="3.6" height="3.6" fill="#fff"/>
<rect x="187.0" y="45.7" width="3.6" height="3.6" fill="#fff"/>
<rect x="193.1" y="45.7" width="3.6" height="3.6" fill="#fff"/>
<rect x="180.8" y="51.9" width="3.6" height="3.6" fill="#fff"/>
<rect x="187.0" y="51.9" width="3.6" height="3.6" fill="#fff"/>
<rect x="193.1" y="51.9" width="3.6" height="3.6" fill="#fff"/>
<rect x="205" y="4.3" width="47.6" height="100" fill="#a4a3a8"/>
<g transform="translate(211.2,14.5)"><rect width="35" height="49" fill="url(#sq)"/></g>
<rect x="297" y="34" width="35.5" height="70" fill="#a4a3a8"/>
<rect x="307.5" y="46.7" width="3.5" height="3.5" fill="#fff"/>
<rect x="313.6" y="46.7" width="3.5" height="3.5" fill="#fff"/>
<rect x="319.8" y="46.7" width="3.5" height="3.5" fill="#fff"/>
<rect x="307.5" y="52.9" width="3.5" height="3.5" fill="#fff"/>
<rect x="313.6" y="52.9" width="3.5" height="3.5" fill="#fff"/>
<rect x="319.8" y="52.9" width="3.5" height="3.5" fill="#fff"/>
<rect x="307.5" y="59.0" width="3.5" height="3.5" fill="#fff"/>
<rect x="313.6" y="59.0" width="3.5" height="3.5" fill="#fff"/>
<rect x="319.8" y="59.0" width="3.5" height="3.5" fill="#fff"/>
<rect x="307.5" y="65.2" width="3.5" height="3.5" fill="#fff"/>
<rect x="313.6" y="65.2" width="3.5" height="3.5" fill="#fff"/>
<rect x="319.8" y="65.2" width="3.5" height="3.5" fill="#fff"/>
<path d="M243 36 L254.2 20 L295.2 20 L306.5 36 Z" fill="#8c8377"/><rect x="251" y="35.5" width="47" height="70" fill="#8c8377"/>
<path d="M257 31 V20.5 L263.8 14.6 L271 20.5 V31 Z" fill="#b9b1a6"/><path d="M255 22 L263.8 14 L273 22" fill="none" stroke="#3e2b26" stroke-width="1"/>
<rect x="259.8" y="21.5" width="3.6" height="3.3" fill="#fff"/><rect x="259.8" y="25.7" width="3.6" height="3.3" fill="#fff"/><rect x="264.4" y="21.5" width="3.6" height="3.3" fill="#fff"/><rect x="264.4" y="25.7" width="3.6" height="3.3" fill="#fff"/>
<rect x="254.6" y="40.5" width="8.3" height="2.2" fill="#3e2b26"/>
<rect x="254.6" y="43.2" width="3.7" height="3.6" fill="#fff"/><rect x="254.6" y="47.8" width="3.7" height="3.6" fill="#fff"/><rect x="259.2" y="43.2" width="3.7" height="3.6" fill="#fff"/><rect x="259.2" y="47.8" width="3.7" height="3.6" fill="#fff"/>
<rect x="254.6" y="54" width="8.3" height="2.2" fill="#3e2b26"/>
<rect x="254.6" y="56.7" width="3.7" height="3.6" fill="#fff"/><rect x="254.6" y="61.2" width="3.7" height="3.6" fill="#fff"/><rect x="259.2" y="56.7" width="3.7" height="3.6" fill="#fff"/><rect x="259.2" y="61.2" width="3.7" height="3.6" fill="#fff"/>
<rect x="265" y="40.5" width="8.3" height="2.2" fill="#3e2b26"/>
<rect x="265.0" y="43.2" width="3.7" height="3.6" fill="#fff"/><rect x="265.0" y="47.8" width="3.7" height="3.6" fill="#fff"/><rect x="269.6" y="43.2" width="3.7" height="3.6" fill="#fff"/><rect x="269.6" y="47.8" width="3.7" height="3.6" fill="#fff"/>
<rect x="265" y="54" width="8.3" height="2.2" fill="#3e2b26"/>
<rect x="265.0" y="56.7" width="3.7" height="3.6" fill="#fff"/><rect x="265.0" y="61.2" width="3.7" height="3.6" fill="#fff"/><rect x="269.6" y="56.7" width="3.7" height="3.6" fill="#fff"/><rect x="269.6" y="61.2" width="3.7" height="3.6" fill="#fff"/>
<rect x="275.7" y="40.5" width="8.3" height="2.2" fill="#3e2b26"/>
<rect x="275.7" y="43.2" width="3.7" height="3.6" fill="#fff"/><rect x="275.7" y="47.8" width="3.7" height="3.6" fill="#fff"/><rect x="280.3" y="43.2" width="3.7" height="3.6" fill="#fff"/><rect x="280.3" y="47.8" width="3.7" height="3.6" fill="#fff"/>
<rect x="275.7" y="54" width="8.3" height="2.2" fill="#3e2b26"/>
<rect x="275.7" y="56.7" width="3.7" height="3.6" fill="#fff"/><rect x="275.7" y="61.2" width="3.7" height="3.6" fill="#fff"/><rect x="280.3" y="56.7" width="3.7" height="3.6" fill="#fff"/><rect x="280.3" y="61.2" width="3.7" height="3.6" fill="#fff"/>
<rect x="286.4" y="40.5" width="8.3" height="2.2" fill="#3e2b26"/>
<rect x="286.4" y="43.2" width="3.7" height="3.6" fill="#fff"/><rect x="286.4" y="47.8" width="3.7" height="3.6" fill="#fff"/><rect x="291.0" y="43.2" width="3.7" height="3.6" fill="#fff"/><rect x="291.0" y="47.8" width="3.7" height="3.6" fill="#fff"/>
<rect x="286.4" y="54" width="8.3" height="2.2" fill="#3e2b26"/>
<rect x="286.4" y="56.7" width="3.7" height="3.6" fill="#fff"/><rect x="286.4" y="61.2" width="3.7" height="3.6" fill="#fff"/><rect x="291.0" y="56.7" width="3.7" height="3.6" fill="#fff"/><rect x="291.0" y="61.2" width="3.7" height="3.6" fill="#fff"/>
<rect x="368.4" y="16" width="48.8" height="90" fill="#a9a8ad"/>
<g transform="translate(373.2,22)"><rect width="41.5" height="84" fill="url(#bars2)"/></g>
<rect x="417" y="33" width="38.4" height="75" fill="url(#strp)"/>
<rect x="417" y="33" width="38.4" height="8.2" fill="#8c8377"/><rect x="421" y="37.5" width="31" height="1.5" fill="#fff"/>
<path d="M325 61 L334 43.8 L369 43.8 L377.5 61 Z" fill="#8c8377"/><rect x="331" y="60.500" width="42" height="45" fill="#8c8377"/>
<path d="M337 57.8 V54 Q337 49.6 341.4 49.6 Q345.8 49.6 345.8 54 V57.8 Z" fill="#fff" stroke="#3e2b26" stroke-width="0.9"/><path d="M341.4 50 V57.8 M337 54 H345.8" stroke="#8c8377" stroke-width="0.7"/>
<path d="M355.7 57.8 V54 Q355.7 49.6 360.09999999999997 49.6 Q364.5 49.6 364.5 54 V57.8 Z" fill="#fff" stroke="#3e2b26" stroke-width="0.9"/><path d="M360.09999999999997 50 V57.8 M355.7 54 H364.5" stroke="#8c8377" stroke-width="0.7"/>
<rect x="334.0" y="64.7" width="3.2" height="4.0" fill="#fff"/><rect x="334.0" y="69.5" width="3.2" height="4.0" fill="#fff"/><rect x="338.1" y="64.7" width="3.2" height="4.0" fill="#fff"/><rect x="338.1" y="69.5" width="3.2" height="4.0" fill="#fff"/>
<rect x="342.7" y="64.7" width="3.2" height="4.0" fill="#fff"/><rect x="342.7" y="69.5" width="3.2" height="4.0" fill="#fff"/><rect x="346.8" y="64.7" width="3.2" height="4.0" fill="#fff"/><rect x="346.8" y="69.5" width="3.2" height="4.0" fill="#fff"/>
<rect x="352.9" y="64.7" width="3.2" height="4.0" fill="#fff"/><rect x="352.9" y="69.5" width="3.2" height="4.0" fill="#fff"/><rect x="357.0" y="64.7" width="3.2" height="4.0" fill="#fff"/><rect x="357.0" y="69.5" width="3.2" height="4.0" fill="#fff"/>
<rect x="362.2" y="64.7" width="3.2" height="4.0" fill="#fff"/><rect x="362.2" y="69.5" width="3.2" height="4.0" fill="#fff"/><rect x="366.3" y="64.7" width="3.2" height="4.0" fill="#fff"/><rect x="366.3" y="69.5" width="3.2" height="4.0" fill="#fff"/>
<rect x="334.0" y="75.5" width="3.2" height="3.5" fill="#fff"/><rect x="334.0" y="80.0" width="3.2" height="3.5" fill="#fff"/><rect x="338.1" y="75.5" width="3.2" height="3.5" fill="#fff"/><rect x="338.1" y="80.0" width="3.2" height="3.5" fill="#fff"/>
<rect x="362.2" y="75.5" width="3.2" height="3.5" fill="#fff"/><rect x="362.2" y="80.0" width="3.2" height="3.5" fill="#fff"/><rect x="366.3" y="75.5" width="3.2" height="3.5" fill="#fff"/><rect x="366.3" y="80.0" width="3.2" height="3.5" fill="#fff"/>
<path d="M345.600 89 V81 Q345.600 76.700 351.300 76.700 Q357 76.700 357 81 V89 Z" fill="#3a2420"/><path d="M346.600 81.500 Q351.300 77 356 81.500" fill="none" stroke="#fff" stroke-width="0.800"/>
<path d="M446 59.600 L455 42 L488 42 L496 59.600 Z" fill="#a4a3a8"/><rect x="450" y="59" width="42" height="50" fill="#a4a3a8"/>
<rect x="454.0" y="62.3" width="3.2" height="2.8" fill="#fff"/><rect x="454.0" y="66.0" width="3.2" height="2.8" fill="#fff"/><rect x="454.0" y="69.7" width="3.2" height="2.8" fill="#fff"/><rect x="458.1" y="62.3" width="3.2" height="2.8" fill="#fff"/><rect x="458.1" y="66.0" width="3.2" height="2.8" fill="#fff"/><rect x="458.1" y="69.7" width="3.2" height="2.8" fill="#fff"/>
<rect x="454.0" y="75.0" width="3.2" height="2.7" fill="#fff"/><rect x="454.0" y="78.6" width="3.2" height="2.7" fill="#fff"/><rect x="454.0" y="82.3" width="3.2" height="2.7" fill="#fff"/><rect x="458.1" y="75.0" width="3.2" height="2.7" fill="#fff"/><rect x="458.1" y="78.6" width="3.2" height="2.7" fill="#fff"/><rect x="458.1" y="82.3" width="3.2" height="2.7" fill="#fff"/>
<rect x="466.8" y="62.3" width="3.2" height="2.8" fill="#fff"/><rect x="466.8" y="66.0" width="3.2" height="2.8" fill="#fff"/><rect x="466.8" y="69.7" width="3.2" height="2.8" fill="#fff"/><rect x="470.9" y="62.3" width="3.2" height="2.8" fill="#fff"/><rect x="470.9" y="66.0" width="3.2" height="2.8" fill="#fff"/><rect x="470.9" y="69.7" width="3.2" height="2.8" fill="#fff"/>
<rect x="466.8" y="75.0" width="3.2" height="2.7" fill="#fff"/><rect x="466.8" y="78.6" width="3.2" height="2.7" fill="#fff"/><rect x="466.8" y="82.3" width="3.2" height="2.7" fill="#fff"/><rect x="470.9" y="75.0" width="3.2" height="2.7" fill="#fff"/><rect x="470.9" y="78.6" width="3.2" height="2.7" fill="#fff"/><rect x="470.9" y="82.3" width="3.2" height="2.7" fill="#fff"/>
<rect x="480.0" y="62.3" width="3.2" height="2.8" fill="#fff"/><rect x="480.0" y="66.0" width="3.2" height="2.8" fill="#fff"/><rect x="480.0" y="69.7" width="3.2" height="2.8" fill="#fff"/><rect x="484.1" y="62.3" width="3.2" height="2.8" fill="#fff"/><rect x="484.1" y="66.0" width="3.2" height="2.8" fill="#fff"/><rect x="484.1" y="69.7" width="3.2" height="2.8" fill="#fff"/>
<rect x="480.0" y="75.0" width="3.2" height="2.7" fill="#fff"/><rect x="480.0" y="78.6" width="3.2" height="2.7" fill="#fff"/><rect x="480.0" y="82.3" width="3.2" height="2.7" fill="#fff"/><rect x="484.1" y="75.0" width="3.2" height="2.7" fill="#fff"/><rect x="484.1" y="78.6" width="3.2" height="2.7" fill="#fff"/><rect x="484.1" y="82.3" width="3.2" height="2.7" fill="#fff"/>
<ellipse cx="470" cy="90" rx="3" ry="3.500" fill="#4a3326"/>
</g>
<g id="trees" filter="url(#tex)">
<g fill="url(#og)">
<circle cx="108.500" cy="63" r="11"/><circle cx="94.500" cy="78" r="9"/><circle cx="127" cy="79.500" r="8.500"/>
<path d="M85.5 88 C85.5 75.9 95.4 66 107.5 66 H114 C126.1 66 136 75.9 136 88 V125 C136 133.8 128.8 141 120 141 H101.5 C92.7 141 85.5 133.8 85.5 125 Z" fill="url(#og)"/>
</g>
<ellipse cx="274" cy="93" rx="26.500" ry="36" fill="url(#og2)"/>
<g fill="url(#og)"><circle cx="397.500" cy="77" r="10.500"/><circle cx="382" cy="88.500" r="8.500"/><circle cx="413.500" cy="91" r="9"/></g>
<path d="M373 98 C373 87.0 382.0 78 393 78 H404 C415.0 78 424 87.0 424 98 V135.5 C424 145.4 415.9 153.5 406 153.5 H391 C381.1 153.5 373 145.4 373 135.5 Z" fill="url(#og)"/>
<path d="M123 115 C123 91.9 135.8 73 151.5 73 H151.5 C167.2 73 180 91.9 180 115 V135.5 C180 147.6 170.1 157.5 158 157.5 H145 C132.9 157.5 123 147.6 123 135.5 Z" fill="#fab140"/>
<ellipse cx="70.500" cy="110" rx="25.500" ry="33" fill="#fab140"/>
<g fill="#fab140"><circle cx="35" cy="89.500" r="11.500"/><circle cx="23" cy="103" r="11"/><ellipse cx="34" cy="114" rx="28" ry="22"/><ellipse cx="33.500" cy="146" rx="26.500" ry="20.500"/><circle cx="19" cy="118" r="9"/></g>
<path d="M203 112.5 C203 89.4 215.8 70.5 231.5 70.5 H231.5 C247.2 70.5 260 89.4 260 112.5 V134 C260 146.1 250.1 156 238 156 H225 C212.9 156 203 146.1 203 134 Z" fill="#fab140"/>
<path d="M164 84 C164 66.4 176.2 52 191.2 52 H191.3 C206.3 52 218.5 66.4 218.5 84 V101 C218.5 112.0 209.5 121 198.5 121 H184 C173.0 121 164 112.0 164 101 Z" fill="#fab140"/>
<path d="M332.5 119 C332.5 101.4 344.3 87 358.7 87 H358.8 C373.2 87 385 101.4 385 119 V132.5 C385 144.6 375.1 154.5 363 154.5 H354.5 C342.4 154.5 332.5 144.6 332.5 132.5 Z" fill="#fab140"/>
<circle cx="311.500" cy="82.500" r="11.500" fill="#fab140"/>
<path d="M283 106 C283 93.9 292.9 84 305 84 H316.5 C328.6 84 338.5 93.9 338.5 106 V135.5 C338.5 147.6 328.6 157.5 316.5 157.5 H305 C292.9 157.5 283 147.6 283 135.5 Z" fill="#fab140"/>
<circle cx="293" cy="97" r="10" fill="#fab140"/>
<path d="M420 117.5 C420 97.7 433.1 81.5 449 81.5 H449 C464.9 81.5 478 97.7 478 117.5 V145 C478 158.2 467.2 169 454 169 H444 C430.8 169 420 158.2 420 145 Z" fill="#fab140"/>
<g fill="url(#og3)"><circle cx="481" cy="90" r="11.500"/><circle cx="492" cy="98" r="10.500"/><circle cx="473" cy="103" r="11"/><circle cx="487" cy="108" r="11.500"/><circle cx="470.500" cy="91" r="9.500"/><circle cx="494" cy="130" r="7"/></g>
<circle cx="470" cy="82.500" r="2.800" fill="#5a3a20"/>
</g>
<g id="tleaves">
<ellipse cx="36.2" cy="92.8" rx="3.2" ry="1.6" fill="#ee8a2c" transform="rotate(-5 36.2 92.8)"/>
<ellipse cx="46.3" cy="109.3" rx="3.2" ry="1.6" fill="#ee8a2c" transform="rotate(-20 46.3 109.3)"/>
<ellipse cx="49.2" cy="147" rx="3.2" ry="1.6" fill="#f3a23a" transform="rotate(-20 49.2 147)"/>
<ellipse cx="20.3" cy="153.3" rx="3.2" ry="1.6" fill="#efb79a" transform="rotate(0 20.3 153.3)"/>
<ellipse cx="78.2" cy="110.8" rx="3.2" ry="1.6" fill="#efb79a" transform="rotate(-10 78.2 110.8)"/>
<ellipse cx="102.8" cy="70.2" rx="3.2" ry="1.6" fill="#f3a23a" transform="rotate(-10 102.8 70.2)"/>
<ellipse cx="117.3" cy="74.6" rx="3.2" ry="1.6" fill="#f3a23a" transform="rotate(-20 117.3 74.6)"/>
<ellipse cx="141.9" cy="89" rx="3.2" ry="1.6" fill="#ee8a2c" transform="rotate(0 141.9 89)"/>
<ellipse cx="134.6" cy="116.6" rx="3.2" ry="1.6" fill="#ee8a2c" transform="rotate(20 134.6 116.6)"/>
<ellipse cx="133.2" cy="147" rx="3.2" ry="1.6" fill="#f3a23a" transform="rotate(0 133.2 147)"/>
<ellipse cx="177.2" cy="83.8" rx="3.2" ry="1.6" fill="#ee8a2c" transform="rotate(0 177.2 83.8)"/>
<ellipse cx="204" cy="80.4" rx="3.2" ry="1.6" fill="#ee8a2c" transform="rotate(-30 204 80.4)"/>
<ellipse cx="199.2" cy="110.2" rx="3.2" ry="1.6" fill="#ee8a2c" transform="rotate(-50 199.2 110.2)"/>
<ellipse cx="233" cy="88.5" rx="3.2" ry="1.6" fill="#ee8a2c" transform="rotate(-25 233 88.5)"/>
<ellipse cx="217" cy="96.3" rx="3.2" ry="1.6" fill="#bfe0a0" transform="rotate(-70 217 96.3)"/>
<ellipse cx="254.8" cy="115" rx="3.2" ry="1.6" fill="#efb79a" transform="rotate(0 254.8 115)"/>
<ellipse cx="246" cy="136" rx="3.2" ry="1.6" fill="#f3a23a" transform="rotate(-60 246 136)"/>
<ellipse cx="254.3" cy="71.7" rx="3.2" ry="1.6" fill="#f3a23a" transform="rotate(-15 254.3 71.7)"/>
<ellipse cx="271" cy="67" rx="3.2" ry="1.6" fill="#f3a23a" transform="rotate(-15 271 67)"/>
<ellipse cx="256" cy="86" rx="3.2" ry="1.6" fill="#f3a23a" transform="rotate(40 256 86)"/>
<ellipse cx="296.3" cy="115" rx="3.2" ry="1.6" fill="#ee8a2c" transform="rotate(-20 296.3 115)"/>
<ellipse cx="344" cy="129" rx="3.2" ry="1.6" fill="#ee8a2c" transform="rotate(20 344 129)"/>
<ellipse cx="364.4" cy="106.4" rx="3.2" ry="1.6" fill="#ee8a2c" transform="rotate(-25 364.4 106.4)"/>
<ellipse cx="377.4" cy="140.6" rx="3.2" ry="1.6" fill="#ee8a2c" transform="rotate(-20 377.4 140.6)"/>
<ellipse cx="342" cy="130.2" rx="3.2" ry="1.6" fill="#ee8a2c" transform="rotate(15 342 130.2)"/>
<ellipse cx="407.8" cy="92.8" rx="3.2" ry="1.6" fill="#ee8a2c" transform="rotate(-10 407.8 92.8)"/>
<ellipse cx="389" cy="132.5" rx="3.2" ry="1.6" fill="#f3a23a" transform="rotate(-20 389 132.5)"/>
<ellipse cx="448.3" cy="92.8" rx="3.2" ry="1.6" fill="#ee8a2c" transform="rotate(15 448.3 92.8)"/>
<ellipse cx="442.5" cy="107.9" rx="3.2" ry="1.6" fill="#ee8a2c" transform="rotate(40 442.5 107.9)"/>
<ellipse cx="423.7" cy="132.5" rx="3.2" ry="1.6" fill="#ee8a2c" transform="rotate(-10 423.7 132.5)"/>
<ellipse cx="463.7" cy="121" rx="3.2" ry="1.6" fill="#f3a23a" transform="rotate(-60 463.7 121)"/>
<ellipse cx="461.3" cy="152.8" rx="3.2" ry="1.6" fill="#f3a23a" transform="rotate(-20 461.3 152.8)"/>
<ellipse cx="474.4" cy="100" rx="3.2" ry="1.6" fill="#f39a30" transform="rotate(25 474.4 100)"/>
</g>
<g id="trunks">
<path d="M35.3 109.5 V184.5" stroke="#6d5a1d" stroke-width="4.6" stroke-linecap="round" fill="none"/><path d="M35.3 122.4 L25.499999999999996 107.0" stroke="#6d5a1d" stroke-width="3.9" stroke-linecap="round" fill="none"/><path d="M35.3 142.6 L47.8 131.0" stroke="#6d5a1d" stroke-width="3.9" stroke-linecap="round" fill="none"/><path d="M35.3 152.8 L23.699999999999996 138.9" stroke="#6d5a1d" stroke-width="3.9" stroke-linecap="round" fill="none"/>
<path d="M68.6 98.5 V173" stroke="#6d5a1d" stroke-width="4.3" stroke-linecap="round" fill="none"/><path d="M68.6 110.8 L59.3 95.5" stroke="#6d5a1d" stroke-width="3.7" stroke-linecap="round" fill="none"/><path d="M68.6 135.4 L80.5 120.4" stroke="#6d5a1d" stroke-width="3.7" stroke-linecap="round" fill="none"/><path d="M68.6 142.6 L63.599999999999994 136.79999999999998" stroke="#6d5a1d" stroke-width="3.7" stroke-linecap="round" fill="none"/>
<path d="M109.4 85 V155" stroke="#6d5a1d" stroke-width="4.3" stroke-linecap="round" fill="none"/><path d="M109.4 97.2 L99.80000000000001 81.9" stroke="#6d5a1d" stroke-width="3.7" stroke-linecap="round" fill="none"/><path d="M109.4 120.9 L121.60000000000001 105.9" stroke="#6d5a1d" stroke-width="3.7" stroke-linecap="round" fill="none"/><path d="M109.4 125.2 L98.4 113.60000000000001" stroke="#6d5a1d" stroke-width="3.7" stroke-linecap="round" fill="none"/>
<path d="M152 103.5 V178.8" stroke="#6d5a1d" stroke-width="4.6" stroke-linecap="round" fill="none"/><path d="M152 118 L142.4 100.6" stroke="#6d5a1d" stroke-width="3.9" stroke-linecap="round" fill="none"/><path d="M152 139.7 L164.4 124.69999999999999" stroke="#6d5a1d" stroke-width="3.9" stroke-linecap="round" fill="none"/><path d="M152 147 L141.3 133.4" stroke="#6d5a1d" stroke-width="3.9" stroke-linecap="round" fill="none"/>
<path d="M191 73 V147" stroke="#6d5a1d" stroke-width="4.3" stroke-linecap="round" fill="none"/><path d="M191 86 L181.7 70" stroke="#6d5a1d" stroke-width="3.7" stroke-linecap="round" fill="none"/><path d="M191 110.8 L202.6 93.4" stroke="#6d5a1d" stroke-width="3.7" stroke-linecap="round" fill="none"/><path d="M191 116.6 L180 102.1" stroke="#6d5a1d" stroke-width="3.7" stroke-linecap="round" fill="none"/>
<path d="M232.5 102 V176" stroke="#6d5a1d" stroke-width="4.6" stroke-linecap="round" fill="none"/><path d="M232.5 112.2 L223.5 99.2" stroke="#6d5a1d" stroke-width="3.9" stroke-linecap="round" fill="none"/><path d="M232.5 138.3 L244.7 123.30000000000001" stroke="#6d5a1d" stroke-width="3.9" stroke-linecap="round" fill="none"/><path d="M232.5 145.5 L221.5 131.9" stroke="#6d5a1d" stroke-width="3.9" stroke-linecap="round" fill="none"/>
<path d="M273.7 79 V150" stroke="#6d5a1d" stroke-width="4.3" stroke-linecap="round" fill="none"/><path d="M273.7 89 L264.4 75.1" stroke="#6d5a1d" stroke-width="3.7" stroke-linecap="round" fill="none"/><path d="M273.7 115 L286.09999999999997 100" stroke="#6d5a1d" stroke-width="3.7" stroke-linecap="round" fill="none"/><path d="M273.7 122.4 L263.0 107.9" stroke="#6d5a1d" stroke-width="3.7" stroke-linecap="round" fill="none"/>
<path d="M311.7 103.5 V177.4" stroke="#6d5a1d" stroke-width="4.6" stroke-linecap="round" fill="none"/><path d="M311.7 113.7 L303.0 100.10000000000001" stroke="#6d5a1d" stroke-width="3.9" stroke-linecap="round" fill="none"/><path d="M311.7 139.7 L321.0 129.7" stroke="#6d5a1d" stroke-width="3.9" stroke-linecap="round" fill="none"/><path d="M311.7 145.5 L300.7 132.5" stroke="#6d5a1d" stroke-width="3.9" stroke-linecap="round" fill="none"/>
<path d="M355.7 109.3 V183" stroke="#6d5a1d" stroke-width="4.6" stroke-linecap="round" fill="none"/><path d="M355.7 121 L347.0 106.5" stroke="#6d5a1d" stroke-width="3.9" stroke-linecap="round" fill="none"/><path d="M355.7 144 L367.3 131" stroke="#6d5a1d" stroke-width="3.9" stroke-linecap="round" fill="none"/><path d="M355.7 151.3 L344.09999999999997 138.3" stroke="#6d5a1d" stroke-width="3.9" stroke-linecap="round" fill="none"/>
<path d="M397.7 99.2 V173" stroke="#6d5a1d" stroke-width="4.6" stroke-linecap="round" fill="none"/><path d="M397.7 110.8 L388.4 96.3" stroke="#6d5a1d" stroke-width="3.9" stroke-linecap="round" fill="none"/><path d="M397.7 134 L409.9 120.4" stroke="#6d5a1d" stroke-width="3.9" stroke-linecap="round" fill="none"/><path d="M397.7 141.2 L386.09999999999997 129.0" stroke="#6d5a1d" stroke-width="3.9" stroke-linecap="round" fill="none"/>
<path d="M446.9 113.7 V187.5" stroke="#6d5a1d" stroke-width="4.2" stroke-linecap="round" fill="none"/><path d="M446.9 123.8 L439.7 110.8" stroke="#6d5a1d" stroke-width="3.6" stroke-linecap="round" fill="none"/><path d="M446.9 148.4 L458.5 134.8" stroke="#6d5a1d" stroke-width="3.6" stroke-linecap="round" fill="none"/><path d="M446.9 155.6 L435.29999999999995 141.1" stroke="#6d5a1d" stroke-width="3.6" stroke-linecap="round" fill="none"/>
<path d="M480.7 115 V178.8" stroke="#6d5a1d" stroke-width="4.2" stroke-linecap="round" fill="none"/><path d="M480.7 132.5 L475.2 118.0" stroke="#6d5a1d" stroke-width="3.6" stroke-linecap="round" fill="none"/><path d="M480.7 142.6 L490.2 135.4" stroke="#6d5a1d" stroke-width="3.6" stroke-linecap="round" fill="none"/>
</g>
<g id="lamps">
<rect x="17.300" y="160" width="2.600" height="10" fill="#1c1416"/><rect x="15.500" y="167" width="6.200" height="17" fill="#1c1416"/><rect x="13.500" y="183.500" width="10.400" height="2.600" fill="#1c1416"/>
<path d="M170.5 122 V179" stroke="#1c1416" stroke-width="2.400"/><rect x="167.3" y="162" width="6.400" height="17" fill="#1c1416"/><rect x="165.1" y="178.3" width="10.800" height="2.700" fill="#1c1416"/><path d="M164.1 108.98 L176.9 108.98 L173.7 121 L167.3 121 Z" fill="#fff" stroke="#1c1416" stroke-width="1.300"/><path d="M163.5 108.98 L170.5 103 L177.5 108.98 Z" fill="#1c1416"/><path d="M170.5 101 V104" stroke="#1c1416" stroke-width="1.200"/><path d="M170.5 108.98 V121" stroke="#1c1416" stroke-width="0.900"/>
<path d="M324 128 V196.5" stroke="#1c1416" stroke-width="2.400"/><rect x="320.8" y="177.5" width="6.400" height="19.0" fill="#1c1416"/><rect x="318.6" y="195.8" width="10.800" height="2.700" fill="#1c1416"/><path d="M316.2 113.43 L331.8 113.43 L327.2 127 L320.8 127 Z" fill="#fff" stroke="#1c1416" stroke-width="1.300"/><path d="M315.59999999999997 113.43 L324 106.5 L332.40000000000003 113.43 Z" fill="#1c1416"/><path d="M324 104.5 V107.5" stroke="#1c1416" stroke-width="1.200"/><path d="M324 113.43 V127" stroke="#1c1416" stroke-width="0.900"/>
<path d="M434.5 124 V178.5" stroke="#1c1416" stroke-width="2.400"/><rect x="431.3" y="163" width="6.400" height="15.5" fill="#1c1416"/><rect x="429.1" y="177.8" width="10.800" height="2.700" fill="#1c1416"/><path d="M428.1 111.29 L440.9 111.29 L437.7 123 L431.3 123 Z" fill="#fff" stroke="#1c1416" stroke-width="1.300"/><path d="M427.5 111.29 L434.5 105.5 L441.5 111.29 Z" fill="#1c1416"/><path d="M434.5 103.5 V106.5" stroke="#1c1416" stroke-width="1.200"/><path d="M434.5 111.29 V123" stroke="#1c1416" stroke-width="0.900"/>
</g>
<g id="gleaves">
<ellipse cx="92" cy="172" rx="2.6" ry="1.3" fill="#f0a040" transform="rotate(10 92 172)"/>
<ellipse cx="118" cy="161" rx="2.6" ry="1.3" fill="#f2b056" transform="rotate(-20 118 161)"/>
<ellipse cx="79" cy="181" rx="2.6" ry="1.3" fill="#f3a443" transform="rotate(0 79 181)"/>
<ellipse cx="128" cy="142" rx="2.6" ry="1.3" fill="#ee9a3c" transform="rotate(20 128 142)"/>
<ellipse cx="153" cy="151" rx="2.6" ry="1.3" fill="#ee9a3c" transform="rotate(-10 153 151)"/>
<ellipse cx="137" cy="195" rx="3.4" ry="1.7" fill="#f0a040" transform="rotate(0 137 195)"/>
<ellipse cx="116" cy="205" rx="3.4" ry="1.7" fill="#f3a443" transform="rotate(-10 116 205)"/>
<ellipse cx="184" cy="137" rx="2.6" ry="1.3" fill="#f3a443" transform="rotate(-30 184 137)"/>
<ellipse cx="200" cy="142" rx="2.6" ry="1.3" fill="#f3a443" transform="rotate(10 200 142)"/>
<ellipse cx="213" cy="158" rx="2.6" ry="1.3" fill="#ee9a3c" transform="rotate(-40 213 158)"/>
<ellipse cx="184" cy="163" rx="2.6" ry="1.3" fill="#f2b056" transform="rotate(10 184 163)"/>
<ellipse cx="188" cy="176" rx="2.6" ry="1.3" fill="#f3a443" transform="rotate(15 188 176)"/>
<ellipse cx="210" cy="168" rx="2.6" ry="1.3" fill="#f0a040" transform="rotate(10 210 168)"/>
<ellipse cx="181" cy="192" rx="3.4" ry="1.7" fill="#f2b056" transform="rotate(-20 181 192)"/>
<ellipse cx="208" cy="193" rx="3.4" ry="1.7" fill="#f2b056" transform="rotate(10 208 193)"/>
<ellipse cx="254" cy="181" rx="2.6" ry="1.3" fill="#f0a040" transform="rotate(-10 254 181)"/>
<ellipse cx="266" cy="151" rx="2.6" ry="1.3" fill="#f3a443" transform="rotate(10 266 151)"/>
<ellipse cx="282" cy="128" rx="2.6" ry="1.3" fill="#f2b056" transform="rotate(0 282 128)"/>
<ellipse cx="280" cy="137" rx="2.6" ry="1.3" fill="#f0a040" transform="rotate(10 280 137)"/>
<ellipse cx="337" cy="153" rx="2.6" ry="1.3" fill="#f3a443" transform="rotate(-10 337 153)"/>
<ellipse cx="339" cy="175" rx="2.6" ry="1.3" fill="#f2b056" transform="rotate(-10 339 175)"/>
<ellipse cx="386" cy="161" rx="2.6" ry="1.3" fill="#f2b056" transform="rotate(10 386 161)"/>
<ellipse cx="337" cy="200" rx="3.4" ry="1.7" fill="#f0a040" transform="rotate(-20 337 200)"/>
<ellipse cx="352" cy="195" rx="3.4" ry="1.7" fill="#f0a040" transform="rotate(10 352 195)"/>
<ellipse cx="373" cy="198" rx="3.4" ry="1.7" fill="#f2b056" transform="rotate(10 373 198)"/>
<ellipse cx="390" cy="205" rx="3.4" ry="1.7" fill="#f2b056" transform="rotate(-20 390 205)"/>
<ellipse cx="342" cy="160" rx="2.6" ry="1.3" fill="#f2b056" transform="rotate(0 342 160)"/>
<ellipse cx="362" cy="157" rx="2.6" ry="1.3" fill="#f3a443" transform="rotate(0 362 157)"/>
<ellipse cx="411" cy="168" rx="2.6" ry="1.3" fill="#f2b056" transform="rotate(-20 411 168)"/>
<ellipse cx="419" cy="177" rx="2.6" ry="1.3" fill="#ee9a3c" transform="rotate(-30 419 177)"/>
<ellipse cx="491" cy="161" rx="2.6" ry="1.3" fill="#f0a040" transform="rotate(20 491 161)"/>
<ellipse cx="472" cy="167" rx="2.6" ry="1.3" fill="#f0a040" transform="rotate(0 472 167)"/>
<ellipse cx="343" cy="138" rx="2.6" ry="1.3" fill="#f0a040" transform="rotate(-20 343 138)"/>
<ellipse cx="238" cy="168" rx="2.6" ry="1.3" fill="#ee9a3c" transform="rotate(60 238 168)"/>
<ellipse cx="232" cy="120" rx="2.6" ry="1.3" fill="#f2b056" transform="rotate(-60 232 120)"/>
<ellipse cx="299" cy="180" rx="2.6" ry="1.3" fill="#f3a443" transform="rotate(20 299 180)"/>
<ellipse cx="420" cy="176" rx="2.4" ry="1.3" fill="#9cc46a" transform="rotate(-30 420 176)"/>
<ellipse cx="425" cy="194" rx="5" ry="1.3" fill="#f0e2c8" transform="rotate(35 425 194)"/>
</g>
<g id="bench1">
<path d="M89 159 h4 v16 h-4z M117 156.500 h4 v16 h-4z" fill="#6f6877"/>
<path d="M90.700 178 h4.600 v9.600 h-4.600z M97.600 178.700 h4.900 v11.900 h-4.900z M126 176.900 h4.200 v9.500 h-4.200z" fill="#6f6877"/>
<path d="M86 161.3 L124.800 159.6 L124.800 162.9 L86 164.6 Z" fill="#e3751c"/>
<path d="M86 165.8 L124.800 164.1 L124.800 167.4 L86 169.1 Z" fill="#e3751c"/>
<path d="M86 170.3 L124.800 168.6 L124.800 171.9 L86 173.6 Z" fill="#e3751c"/>
<path d="M87.800 175.600 L126.600 173.200 L133 176.300 L89.500 178.300 Z" fill="#e3751c"/>
<path d="M101 170.500 Q112 167.500 124 171 Q127 173 126.700 177 L126.700 191.800 L122.300 192 L120.200 179 L119.600 191.800 L114.200 192 L113.600 178 Q106 178.500 101.800 175.500 Z" fill="#4a5f8a"/>
<path d="M98.200 160 Q102 156.500 107.500 157.500 L113.700 166.500 Q113 169.500 108 170.300 Q102 171 99 169.800 Q97.500 165 98.200 160 Z" fill="#94998b"/>
<path d="M107 158.200 L111.500 156.300 L112.700 157.800 L116 156 L116 162.500 L112 164 L108.500 163.200 Z" fill="#d9552a"/>
<path d="M104.200 149.300 h4 v7.200 h-4z" fill="#f5dcc8"/><path d="M100 153.500 Q99.800 147.600 104.500 147.600 Q108.200 147.600 108.200 150 L105.200 150 Q104.500 154 104.800 157 Q100.500 157.500 100 153.500 Z" fill="#1e1a1c"/>
<path d="M114.200 191.800 L119.800 191.800 L122.400 197.800 L114.200 197.400 Z M124 191.800 L127.500 191.800 L133 197.500 L132.500 199 L124.500 198 Z" fill="#18161a"/>
</g>
<g id="bench2">
<path d="M263 164 h1.200 v9 h-1.200z M302.500 164 h1.200 v9 h-1.200z M260 179 h1.400 v8.500 h-1.400z M305 179 h1.400 v8.500 h-1.400z" fill="#3a2a22"/>
<rect x="258" y="161" width="50" height="3.6" fill="#e3751c"/>
<rect x="258" y="166.3" width="50" height="3.3" fill="#e3751c"/>
<rect x="256.500" y="173" width="54" height="2.500" fill="#e3751c"/><rect x="255" y="176.600" width="57.200" height="2.500" fill="#e3751c"/>
<ellipse cx="265" cy="180.200" rx="5.500" ry="2.400" fill="#f0a84e"/>
<path d="M283.500 174.500 H301.400 L300.800 193 H293.500 L292.500 180.500 L291.500 193 H287.500 Z" fill="#4a5f85"/>
<path d="M287 193.200 h4.300 v3.200 h-4.500z M293.200 193.200 h4.200 l0.300 3.200 h-4.500z" fill="#5a5050"/>
<path d="M283 158.500 Q286 154 292 154 Q299.500 154.500 302 159 L303.300 172.500 Q300 175.500 292 175.200 Q285 175 282.500 173 Z" fill="#8e8e93"/>
<path d="M285.500 152.500 Q291 150 297.500 152.500 L298.300 160 Q296 166.500 291 166.500 Q287 163 285.500 158 Z" fill="#5d6980"/>
<path d="M287.400 146.500 h6.600 v3.500 q-3.300 4 -6.600 0 z" fill="#f5dcc8"/><path d="M287 147.300 Q286.800 142 291 142 Q295.200 142 295 147.300 Z" fill="#586279"/>
<path d="M270.700 175 H283.500 L283.300 190.400 H279.500 L277.300 179 L275.500 190.400 H271.200 Z" fill="#f2bfcc"/>
<path d="M271 190.300 h4 v6.500 h-3.300z M279.800 190.300 h3.800 l-0.400 6 h-2.800z" fill="#5e5254"/>
<path d="M266.300 163 Q267 156.500 276 155.300 Q285.500 156.500 286.500 163 L286.300 173 Q283 177.500 276 177.300 Q269 177.500 266.500 174 Z" fill="#9c5a2a"/>
<path d="M272.800 150 h2.200 v7 h-2.200z M279.600 150 h2 v7 h-2z" fill="#8a4a22"/>
<path d="M274.500 150 h6 v3 q-3 4 -6 0 z" fill="#f8e0d0"/>
<path d="M272.500 151.400 Q273.200 144.800 276.200 143 Q279.800 144.800 280.900 151.400 Q276.700 149.600 272.500 151.400 Z" fill="#c4202c"/><circle cx="276" cy="143.500" r="1.300" fill="#c4202c"/>
<rect x="275.300" y="166" width="4" height="3.200" fill="#fff"/><rect x="275.300" y="165.300" width="4" height="1.100" fill="#3a2a22"/><rect x="292.400" y="167" width="3.600" height="3.200" fill="#fff"/><rect x="292.400" y="166.300" width="3.600" height="1.100" fill="#3a2a22"/>
</g>
<g id="bench3">
<path d="M457.800 171.300 h3 l-0.800 16.500 h-3z M486.500 172.900 h3 l-0.600 16 h-3z" fill="#0f6c46"/>
<path d="M453.100 172.9 L492 174.9 L492 178.3 L453.100 176.2 Z" fill="#e3751c"/>
<path d="M453.100 177.4 L492 179.4 L492 182.8 L453.100 180.7 Z" fill="#e3751c"/>
<path d="M453.100 181.9 L492 183.9 L492 187.3 L453.100 185.2 Z" fill="#e3751c"/>
<path d="M445.400 189.900 L453.100 186.900 L490.200 189.300 L484.200 192.900 Z" fill="#e3751c"/>
<path d="M450 191 h3.300 l-2 9.600 h-3.300z M456 191 h3.300 l-1.300 6.600 h-3.300z M477.200 192.900 h3.500 l-0.800 11.900 h-3.500z M484 192.300 h3.400 l-1.200 9.500 h-3.400z" fill="#0f6c46"/>
</g>
</g>
<!--/ILLUSTRATION-->
</svg>
<svg style="left:0;top:0" width="898" height="585" viewBox="0 0 898 585">
<defs><filter id="ash" x="-30%" y="-30%" width="160%" height="160%"><feDropShadow dx="0.800" dy="1.200" stdDeviation="1" flood-color="#000" flood-opacity="0.350"/></filter></defs>
<rect x="81" y="162.300" width="510" height="210" fill="none" stroke="#3f80da" stroke-width="2"/>
<g opacity="1"><circle cx="336.5" cy="144.5" r="5.700" fill="#fff" stroke="#2f7be0" stroke-width="1.200"/><path d="M333.3 144.5 H339.7 M336.5 141.3 V147.7" stroke="#2f7be0" stroke-width="1.300"/></g><g opacity="1"><circle cx="609" cy="267" r="5.700" fill="#fff" stroke="#2f7be0" stroke-width="1.200"/><path d="M605.8 267 H612.2 M609 263.8 V270.2" stroke="#2f7be0" stroke-width="1.300"/></g><g opacity="1"><circle cx="336.5" cy="390" r="5.700" fill="#fff" stroke="#2f7be0" stroke-width="1.200"/><path d="M333.3 390 H339.7 M336.5 386.8 V393.2" stroke="#2f7be0" stroke-width="1.300"/></g>
<circle cx="63.500" cy="267.500" r="5.600" fill="#5b5b5b" stroke="#2c4f86" stroke-width="1.400"/><path d="M60.300 267.500 H66.700 M63.500 264.300 V270.700" stroke="#2c4f86" stroke-width="1.500"/><path d="M68 263.300 A6.300 6.300 0 0 1 68 271.700 Z" fill="#4a8fe8"/><rect x="62" y="267" width="6" height="1" fill="#e4e4e4"/>
<circle cx="81" cy="162.3" r="3" fill="#fff" stroke="#4a8fe8" stroke-width="1.400"/><circle cx="336.5" cy="162.3" r="3" fill="#fff" stroke="#4a8fe8" stroke-width="1.400"/><circle cx="591" cy="162.3" r="3" fill="#fff" stroke="#4a8fe8" stroke-width="1.400"/><circle cx="81" cy="267" r="3" fill="#fff" stroke="#4a8fe8" stroke-width="1.400"/><circle cx="591" cy="267" r="3" fill="#fff" stroke="#4a8fe8" stroke-width="1.400"/><circle cx="81" cy="372.3" r="3" fill="#fff" stroke="#4a8fe8" stroke-width="1.400"/><circle cx="336.5" cy="372.3" r="3" fill="#fff" stroke="#4a8fe8" stroke-width="1.400"/><circle cx="591" cy="372.3" r="3" fill="#fff" stroke="#4a8fe8" stroke-width="1.400"/>
<g fill="#ff2d6f" filter="url(#ash)">
<path d="M348.700 139.500 Q350 138.500 351.400 139.500 L353 166.500 L358.800 163.700 L350.300 180 L341.500 163.700 L347.300 166.500 Z"/>
<path d="M349.700 403 L348.300 375 L342.500 377.500 L351 360.500 L359.700 377.500 L354 375 L352.500 403 Z"/>
<path d="M62 280.300 Q61 281.500 62 282.800 L88 284.500 L85.500 290.500 L103 281.700 L85.500 273 L88 278.800 Z"/>
<path d="M619.500 281.500 Q620.500 282.800 619.500 284.100 L594.500 285.800 L597 291.500 L579 282.800 L597 274.200 L594.500 279.800 Z"/>
</g>
</svg>
<!-- RIGHT PANEL -->
<div style="left:632px;top:96px;width:2px;height:489px;background:#101010"></div>
<div id="right" style="left:634px;top:96px;width:264px;height:469px;background:#1b1b1b"></div>

<!-- panel header row 1 -->
<div style="left:634px;top:96px;width:264px;height:28px;background:#242424"></div>
<div style="left:641px;top:100px;width:4px;height:18px;background:#444;border-radius:2px"></div>
<div class="t" style="left:663px;top:104.800px;font-size:10.400px;color:#c4c4c4">カラー</div>
<div style="left:704px;top:100px;width:63px;height:19px;background:#464646;border-radius:5px"></div>
<div class="t" style="left:710px;top:104.800px;font-size:10.200px;font-weight:bold;color:#f4f4f4">スウォッチ</div>
<div class="t" style="left:778px;top:104.800px;font-size:10.400px;color:#c4c4c4">境界線</div>
<div class="t" style="left:824px;top:104.800px;font-size:10.400px;color:#c4c4c4">アピア</div>
<div style="left:873px;top:101px;width:16px;height:17px;border:1px solid #8a8a8a;border-radius:4px"></div>
<svg style="left:876px;top:106px" width="10" height="8" viewBox="0 0 10 8" fill="none" stroke="#e6e6e6" stroke-width="1.8" stroke-linecap="round" stroke-linejoin="round"><path d="M1 1.2 L5 6.5 L9 1.2"/></svg>
<!-- panel header row 2 -->
<div style="left:634px;top:126px;width:264px;height:27px;background:#242424"></div>
<div style="left:641px;top:130px;width:4px;height:18px;background:#444;border-radius:2px"></div>
<div class="t" style="left:663px;top:134.800px;font-size:10.400px;color:#c4c4c4">Ass</div>
<div style="left:693px;top:130px;width:53px;height:19px;background:#464646;border-radius:5px"></div>
<div class="t" style="left:700px;top:134.800px;font-size:10.200px;font-weight:bold;color:#f4f4f4">レイヤー</div>
<div class="t" style="left:757px;top:134.800px;font-size:10.400px;color:#c4c4c4">パス</div>
<div class="t" style="left:795px;top:134.800px;font-size:10.400px;color:#c4c4c4">エフ</div>
<div class="t" style="left:835px;top:134.800px;font-size:10.400px;color:#c4c4c4">スタ</div>
<div style="left:873px;top:131px;width:16px;height:17px;border:1px solid #8a8a8a;border-radius:4px"></div>
<svg style="left:876px;top:136px" width="10" height="8" viewBox="0 0 10 8" fill="none" stroke="#e6e6e6" stroke-width="1.8" stroke-linecap="round" stroke-linejoin="round"><path d="M1 1.2 L5 6.5 L9 1.2"/></svg>
<!-- opacity row -->
<div style="left:634px;top:153px;width:264px;height:34px;background:#343434"></div>
<div class="t" style="left:639px;top:165.600px;font-size:10.400px;color:#c8c8c8">不透明度:</div>
<div class="inp" style="left:687px;top:161px;width:42px;height:20px;border-radius:3px 0 0 3px"><span class="t" style="left:3px;top:4px">100 %</span></div>
<div class="inp" style="left:730px;top:161px;width:12px;height:20px;border-radius:0 3px 3px 0"></div>
<svg style="left:733px;top:169px" width="7" height="5" viewBox="0 0 7 5" fill="none" stroke="#e0e0e0" stroke-width="1.5" stroke-linecap="round" stroke-linejoin="round"><path d="M1 1 L3.5 4 L6 1"/></svg>
<div class="sel" style="left:746px;top:161px;width:104px;height:20px"></div>
<div class="t" style="left:750px;top:165.600px;font-size:10.200px;font-weight:bold;color:#f0f0f0">標準</div>
<svg style="left:839px;top:164px" width="8" height="14" viewBox="0 0 8 14" fill="none" stroke="#e8e8e8" stroke-width="1.6" stroke-linecap="round" stroke-linejoin="round"><path d="M1.5 4.5 L4 2 L6.5 4.5 M1.5 9.5 L4 12 L6.5 9.5"/></svg>
<svg style="left:858px;top:165px" width="12.500" height="12.500" viewBox="0 0 14 14"><g fill="#e2e2e2"><circle cx="7" cy="7" r="4.6"/><g id="gt"><rect x="5.6" y="0.3" width="2.8" height="13.4" rx="0.6"/></g><rect x="5.6" y="0.3" width="2.8" height="13.4" rx="0.6" transform="rotate(45 7 7)"/><rect x="5.6" y="0.3" width="2.8" height="13.4" rx="0.6" transform="rotate(90 7 7)"/><rect x="5.6" y="0.3" width="2.8" height="13.4" rx="0.6" transform="rotate(135 7 7)"/></g><circle cx="7" cy="7" r="2" fill="#323232"/></svg>
<svg style="left:879px;top:163px" width="11" height="15" viewBox="0 0 11 15"><path d="M3 7.500 V4.300 Q3 1.400 5.500 1.400 Q8 1.400 8 4.300 V7.500" fill="none" stroke="#bdbdbd" stroke-width="1.500"/><rect x="1" y="7" width="9" height="7" rx="1" fill="#bdbdbd"/></svg>
<!-- layer row 1 -->
<div style="left:634px;top:188px;width:263px;height:36px;background:#0a5dc2"></div>
<div style="left:650px;top:188px;width:1px;height:36px;background:#1b1b1b"></div>
<div style="left:651px;top:188px;width:37px;height:36px;background:#262626"></div>
<div style="left:865px;top:188px;width:1px;height:36px;background:#1b3f78"></div>
<svg style="left:637px;top:192px" width="11" height="11" viewBox="0 0 11 11" stroke="#b5a384" stroke-width="0.900" fill="none"><path d="M3.5 0.500 V10.500 M7.5 0.500 V10.500 M0.500 3.5 H10.500 M0.500 7.5 H10.500"/></svg>
<svg style="left:638.500px;top:211.500px" width="7.500" height="6" viewBox="0 0 9 7" fill="none" stroke="#f0f0f0" stroke-width="1.8" stroke-linecap="round" stroke-linejoin="round"><path d="M1 1.2 L4.5 5.5 L8 1.2"/></svg>
<svg style="left:651.5px;top:198.3px" width="35" height="14.400" viewBox="0 0 510 210"><use href="#illus"/></svg>
<div class="t" style="left:698px;top:201.800px;font-size:10.400px;letter-spacing:-0.500px;color:#fff">ページ1</div>
<svg style="left:875px;top:202px" width="10.500" height="7" viewBox="0 0 12 8"><path d="M0.3 4 Q6 -2.5 11.7 4 Q6 10.5 0.3 4 Z" fill="#f0f0f0"/><circle cx="6" cy="4" r="2" fill="#333"/></svg>
<!-- layer row 2 -->
<div style="left:634px;top:225px;width:263px;height:36px;background:#343434"></div>
<div style="left:634px;top:225px;width:8px;height:36px;background:#2c2c2c"></div>
<div style="left:642px;top:225px;width:1px;height:36px;background:#1b1b1b"></div>
<div style="left:658px;top:225px;width:1px;height:36px;background:#1b1b1b"></div>
<div style="left:659px;top:225px;width:38px;height:36px;background:#262626"></div>
<div style="left:865px;top:225px;width:1px;height:36px;background:#242424"></div>
<svg style="left:648.500px;top:239.500px" width="5" height="7.500" viewBox="0 0 6 9" fill="none" stroke="#e6e6e6" stroke-width="1.6" stroke-linecap="round" stroke-linejoin="round"><path d="M1 1 L4.8 4.5 L1 8"/></svg>
<svg style="left:660.3px;top:234.7px" width="35" height="14.400" viewBox="0 0 510 210"><use href="#illus"/></svg>
<div class="t" style="left:707px;top:239px;font-size:10.200px;font-weight:bold;letter-spacing:-1px;color:#ececec">イラスト全体</div>
<svg style="left:875px;top:239.500px" width="10.500" height="7" viewBox="0 0 12 8"><path d="M0.3 4 Q6 -2.5 11.7 4 Q6 10.5 0.3 4 Z" fill="#f0f0f0"/><circle cx="6" cy="4" r="2" fill="#333"/></svg>
<!-- layers bottom toolbar -->
<div style="left:634px;top:380px;width:264px;height:34px;background:#343434"></div>
<svg style="left:640px;top:389px" width="250" height="19" viewBox="0 0 250 19">
 <g fill="none" stroke="#dcdcdc" stroke-width="1.2"><path d="M9 2.5 H1.5 V16.5 H15.500 V9"/><path d="M14.500 1.500 L16.500 3.500 L9 11 L6.500 11.500 L7 9 Z"/></g>
 <rect x="54" y="1" width="16" height="16" fill="#e6e6e6"/><text x="62" y="14" font-size="11" font-weight="bold" font-family="Liberation Sans, sans-serif" text-anchor="middle" fill="#222" textLength="13">FX</text>
 <rect x="76" y="1" width="16" height="16" fill="#e6e6e6"/><circle cx="84" cy="9" r="5.200" fill="#222"/>
 <path d="M98 1 H113 V2.500 Q112.500 7 107.500 9 Q112.500 11 113 15.500 V17 H98 V15.500 Q98.500 11 103.500 9 Q98.500 7 98 2.500 Z" fill="#e6e6e6"/>
 <circle cx="128" cy="9" r="7.500" fill="#e6e6e6"/><path d="M133.300 3.700 A7.500 7.500 0 0 1 122.700 14.300 Z" fill="#323232"/><circle cx="128" cy="9" r="7.500" fill="none" stroke="#e6e6e6" stroke-width="1.200"/>
 <rect x="168.600" y="1.600" width="14.800" height="14.800" fill="none" stroke="#e6e6e6" stroke-width="1.200"/><circle cx="175" cy="8" r="4" fill="#e6e6e6"/><rect x="176" y="9" width="6" height="6" fill="#e6e6e6" stroke="#323232" stroke-width="0.8"/>
 <path d="M190.600 16.400 V2.600 H196 L198 5 H205.400 V16.400 Z" fill="none" stroke="#dcdcdc" stroke-width="1.200"/>
 <g fill="#e6e6e6"><rect x="212.0" y="1.0" width="3.200" height="3.200"/><rect x="212.0" y="7.4" width="3.200" height="3.200"/><rect x="212.0" y="13.8" width="3.200" height="3.200"/><rect x="215.2" y="4.2" width="3.200" height="3.200"/><rect x="215.2" y="10.6" width="3.200" height="3.200"/><rect x="218.4" y="1.0" width="3.200" height="3.200"/><rect x="218.4" y="7.4" width="3.200" height="3.200"/><rect x="218.4" y="13.8" width="3.200" height="3.200"/><rect x="221.6" y="4.2" width="3.200" height="3.200"/><rect x="221.6" y="10.6" width="3.200" height="3.200"/><rect x="224.8" y="1.0" width="3.200" height="3.200"/><rect x="224.8" y="7.4" width="3.200" height="3.200"/><rect x="224.8" y="13.8" width="3.200" height="3.200"/></g>
 <g fill="none" stroke="#dcdcdc" stroke-width="1.200"><path d="M236 4 H249 M240 4 V1.600 H245 V4 M237.500 4 L238.200 16.500 H246.800 L247.500 4 M240.800 7 V14 M244.200 7 V14"/></g>
</svg>
<!-- transform panel -->
<div style="left:634px;top:414px;width:264px;height:150px;background:#343434"></div>
<div style="left:634px;top:415px;width:262px;height:29px;background:#242424"></div>
<div style="left:641px;top:420px;width:4px;height:18px;background:#444;border-radius:2px"></div>
<div style="left:652px;top:420px;width:33px;height:19px;background:#464646;border-radius:5px"></div>
<div class="t" style="left:657px;top:424.800px;font-size:10.200px;font-weight:bold;color:#f4f4f4">変形</div>
<div class="t" style="left:691px;top:424.800px;font-size:10.400px;letter-spacing:-0.400px;color:#c4c4c4">ナビゲータ</div>
<div class="t" style="left:754px;top:424.800px;font-size:10.400px;color:#c4c4c4">履歴</div>
<div style="left:873px;top:421px;width:16px;height:17px;border:1px solid #8a8a8a;border-radius:4px"></div>
<svg style="left:876px;top:426px" width="10" height="8" viewBox="0 0 10 8" fill="none" stroke="#e6e6e6" stroke-width="1.8" stroke-linecap="round" stroke-linejoin="round"><path d="M1 1.2 L5 6.5 L9 1.2"/></svg>
<div style="left:655px;top:471px;width:32px;height:33px;background:#6a6a6a"></div>
<svg style="left:648px;top:466px" width="42" height="42" viewBox="0 0 42 42"><g fill="#9c9c9c"><rect x="20" y="3" width="5" height="5"/><rect x="36" y="3" width="5" height="5"/><rect x="4" y="19.500" width="5" height="5"/><rect x="20" y="19.500" width="5" height="5"/><rect x="36" y="19.500" width="5" height="5"/><rect x="4" y="36" width="5" height="5"/><rect x="20" y="36" width="5" height="5"/><rect x="36" y="36" width="5" height="5"/></g><rect x="1" y="1" width="10" height="10" fill="#fff"/></svg>
<div class="t" style="left:713px;top:462px;font-size:12px;color:#c8c8c8">X:</div>
<div class="inp" style="left:728px;top:458px;width:58px;height:18px"><span class="t" style="left:3px;top:3px">0 px</span></div>
<div class="t" style="left:713px;top:484px;font-size:12px;color:#c8c8c8">Y:</div>
<div class="inp" style="left:728px;top:480px;width:58px;height:18px"><span class="t" style="left:3px;top:3px">0 px</span></div>
<div class="t" style="left:797px;top:462px;font-size:12px;color:#c8c8c8">W:</div>
<div class="inp" style="left:816px;top:458px;width:58px;height:18px"><span class="t" style="left:3px;top:3px">680 px</span></div>
<div class="t" style="left:800px;top:483px;font-size:12px;color:#c8c8c8">H:</div>
<div class="inp" style="left:816px;top:480px;width:58px;height:18px"><span class="t" style="left:3px;top:3px">280 px</span></div>
<div class="t" style="left:713px;top:511px;font-size:12px;color:#c8c8c8">R:</div>
<div class="inp" style="left:728px;top:506px;width:46px;height:18px;border-radius:3px 0 0 3px"><span class="t" style="left:3px;top:3px">0 °</span></div>
<div class="inp" style="left:775px;top:506px;width:11px;height:18px;border-radius:0 3px 3px 0"></div>
<svg style="left:777px;top:513px" width="7" height="5" viewBox="0 0 7 5" fill="none" stroke="#e0e0e0" stroke-width="1.5" stroke-linecap="round" stroke-linejoin="round"><path d="M1 1 L3.5 4 L6 1"/></svg>
<div class="t" style="left:801px;top:511px;font-size:12px;color:#c8c8c8">S:</div>
<div class="inp" style="left:816px;top:506px;width:46px;height:18px;border-radius:3px 0 0 3px"><span class="t" style="left:3px;top:3px">0 °</span></div>
<div class="inp" style="left:863px;top:506px;width:11px;height:18px;border-radius:0 3px 3px 0"></div>
<svg style="left:865px;top:513px" width="7" height="5" viewBox="0 0 7 5" fill="none" stroke="#e0e0e0" stroke-width="1.5" stroke-linecap="round" stroke-linejoin="round"><path d="M1 1 L3.5 4 L6 1"/></svg>
<svg style="left:880px;top:468px" width="10" height="21" viewBox="0 0 10 21" fill="none" stroke="#b8b8b8" stroke-width="1.1"><path d="M1.500 7 V3 Q1.500 1.500 3 1.500 H6.500 Q8 1.500 8 3 V7 M1.500 14 V18 Q1.500 19.500 3 19.500 H6.500 Q8 19.500 8 18 V14 M4.800 8 V13"/></svg>
<div style="left:835px;top:530px;width:28px;height:21px;background:#1d1d1d;border:1px solid #5a5a5a;border-radius:7px"></div>
<svg style="left:841px;top:534px" width="16" height="14" viewBox="0 0 16 14"><path d="M1 4 V1 H5 M8 1 H11 M14 1 H15 V4 M15 7 V10 M15 12 V13 H11" fill="none" stroke="#e0e0e0" stroke-width="1.3"/><rect x="0.500" y="6" width="8" height="7.500" rx="1.500" fill="#e0e0e0"/></svg>
<svg style="left:867px;top:538px" width="7" height="5" viewBox="0 0 7 5" fill="none" stroke="#c8c8c8" stroke-width="1.5" stroke-linecap="round" stroke-linejoin="round"><path d="M1 1 L3.5 4 L6 1"/></svg>
<div style="left:634px;top:415px;width:261px;height:140px;border:1px solid #cf2a62;border-radius:1px"></div>

<!-- STATUS BAR -->
<div style="left:0;top:564px;width:898px;height:1px;background:#141414"></div>
<div id="status" style="left:0;top:565px;width:898px;height:20px;background:#353535"></div>

<div style="left:632px;top:565px;width:2px;height:20px;background:#141414"></div>
<div style="left:44px;top:566px;width:100px;height:18px;background:#212121;border-radius:5px"></div>
<div class="t" style="left:44px;top:568.500px;width:100px;text-align:center;font-size:11.800px;font-weight:bold;color:#dedede">1 / 1</div>
<svg style="left:10px;top:568px" width="250" height="15" viewBox="0 0 250 15">
 <g fill="#4e4e4e"><rect x="2" y="2" width="1.3" height="10"/><path d="M12 2 V12 L4 7 Z"/><path d="M29 2 V12 L21 7 Z"/><path d="M154 2 V12 L162 7 Z"/><rect x="163" y="2" width="1.3" height="10"/></g>
 <path d="M137 2 V12 L145.500 7 Z" fill="#e4e4e4"/>
 <g fill="none" stroke="#4a4a4a" stroke-width="1.2"><rect x="174" y="1" width="9" height="12"/><path d="M176 4 H181 M176 6.500 H181 M176 9 H181 M176 11 H181" stroke-width="0.8"/><path d="M193 8 Q193 5 197 5 H203 M200 3 L203 5 L200 7"/><ellipse cx="198" cy="10" rx="3" ry="2"/></g>
 <g fill="none" stroke="#d8d8d8" stroke-width="1.200"><rect x="211.600" y="1.600" width="8" height="9.500" rx="1"/><path d="M222 4 V13.400 H215"/></g>
 <g fill="none" stroke="#8c8c8c" stroke-width="1.200"><rect x="232.600" y="1.600" width="8.500" height="11" /><path d="M234.500 4.500 H239 M234.500 6.500 H239 M234.500 8.500 H239 M234.500 10.500 H239" stroke-width="0.900"/><path d="M243 3 V14 H235" stroke="#5a5a5a"/></g>
</svg>
<div class="t" style="left:279px;top:570px;width:353px;overflow:hidden;font-size:10.300px;color:#d0d0d0;height:14px;line-height:12px"><b style="position:static;color:#f2f2f2">ドラッグ</b>で新しい長方形シェイプを作成します。+⇧で比率を固定します。+⌘で</div>
<div class="t" style="left:640.500px;top:570px;font-size:9.400px;font-weight:bold;color:#f0f0f0">カテゴリ上の秋の風景 <span style="position:static;font-size:10.400px">(75.0%)</span></div>

</div>
</body>
</html>
